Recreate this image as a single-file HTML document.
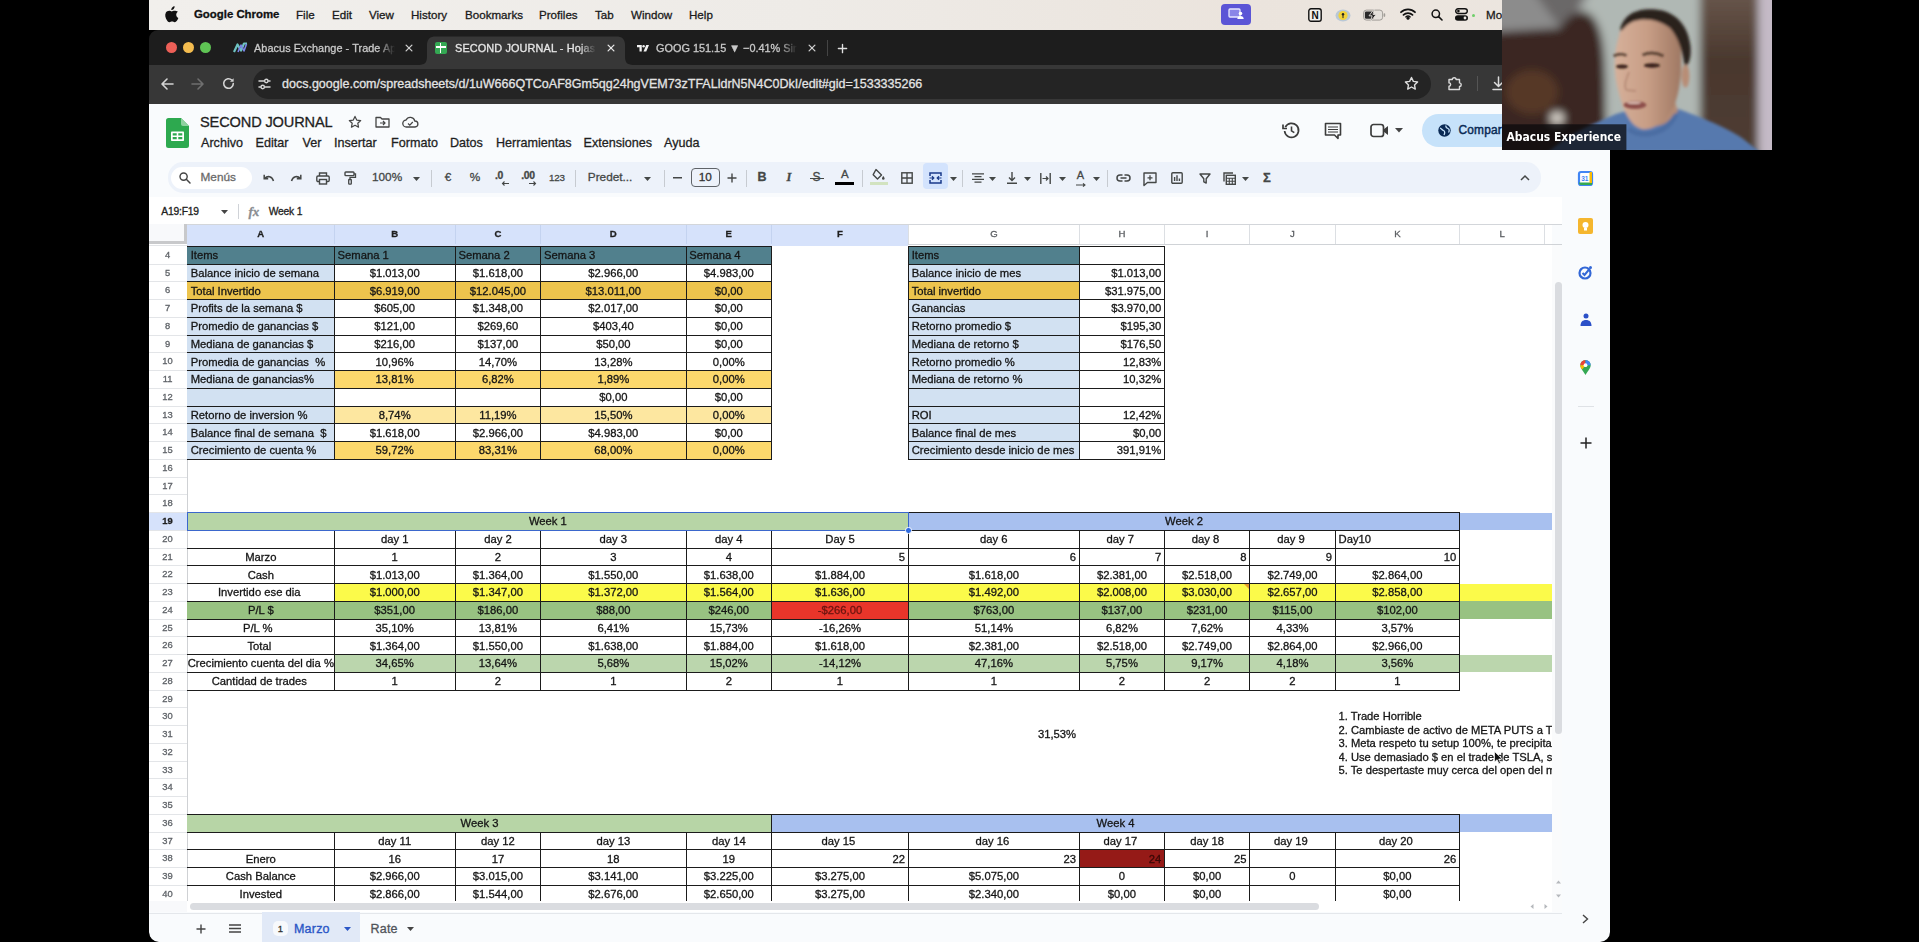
<!DOCTYPE html>
<html><head><meta charset="utf-8"><title>SECOND JOURNAL</title>
<style>
html,body{margin:0;padding:0;background:#000;}
body{width:1919px;height:942px;position:relative;overflow:hidden;font-family:"Liberation Sans",sans-serif;}
#r div{position:absolute;white-space:nowrap;box-sizing:border-box;overflow:visible}
#r svg{position:absolute;overflow:visible}
#r{filter:blur(0.4px)}
#r div{-webkit-text-stroke:0.3px currentColor}
</style></head><body><div id="r">
<div style="left:149.00px;top:0.00px;width:1461.00px;height:30.00px;background:linear-gradient(90deg,#f1efec 0%,#eeebe7 45%,#ebe4dd 75%,#ece6e0 100%);"></div>
<svg style="left:165px;top:6px" width="14" height="17" viewBox="0 0 14 17"><path d="M9.6 0.3c.1 1-.3 1.9-.9 2.6-.6.7-1.500 1.200-2.400 1.100-.1-.9.300-1.900.900-2.500.6-.7 1.600-1.200 2.400-1.200zM12.900 5.800c-.1.100-1.700 1-1.700 3 0 2.400 2.100 3.200 2.100 3.200 0 .1-.300 1.200-1.100 2.300-.7 1-1.400 1.900-2.500 1.900s-1.400-.6-2.600-.6c-1.200 0-1.600.6-2.600.7-1.100 0-1.900-1-2.600-2C.5 12.300-.5 8.900.9 6.600c.7-1.200 1.900-1.900 3.200-1.900 1 0 2 .7 2.600.7.600 0 1.800-.800 3.100-.700.500 0 2 .200 3.100 1.100z" fill="#111"/></svg>
<div style="left:194.00px;top:0.00px;width:90.00px;height:29.00px;line-height:29.00px;font-size:11.4px;color:#111;text-align:left;font-weight:700;">Google Chrome</div>
<div style="left:296.00px;top:0.00px;width:60.00px;height:29.00px;line-height:29.00px;font-size:11.6px;color:#1a1a1a;text-align:left;font-weight:400;">File</div>
<div style="left:332.00px;top:0.00px;width:60.00px;height:29.00px;line-height:29.00px;font-size:11.6px;color:#1a1a1a;text-align:left;font-weight:400;">Edit</div>
<div style="left:369.00px;top:0.00px;width:60.00px;height:29.00px;line-height:29.00px;font-size:11.6px;color:#1a1a1a;text-align:left;font-weight:400;">View</div>
<div style="left:411.00px;top:0.00px;width:60.00px;height:29.00px;line-height:29.00px;font-size:11.6px;color:#1a1a1a;text-align:left;font-weight:400;">History</div>
<div style="left:465.00px;top:0.00px;width:60.00px;height:29.00px;line-height:29.00px;font-size:11.6px;color:#1a1a1a;text-align:left;font-weight:400;">Bookmarks</div>
<div style="left:539.00px;top:0.00px;width:60.00px;height:29.00px;line-height:29.00px;font-size:11.6px;color:#1a1a1a;text-align:left;font-weight:400;">Profiles</div>
<div style="left:595.00px;top:0.00px;width:60.00px;height:29.00px;line-height:29.00px;font-size:11.6px;color:#1a1a1a;text-align:left;font-weight:400;">Tab</div>
<div style="left:631.00px;top:0.00px;width:60.00px;height:29.00px;line-height:29.00px;font-size:11.6px;color:#1a1a1a;text-align:left;font-weight:400;">Window</div>
<div style="left:689.00px;top:0.00px;width:60.00px;height:29.00px;line-height:29.00px;font-size:11.6px;color:#1a1a1a;text-align:left;font-weight:400;">Help</div>
<div style="left:1220.80px;top:4.00px;width:30.50px;height:20.50px;background:#5b55d6;border-radius:4px"></div>
<svg style="left:1228px;top:8px" width="17" height="12" viewBox="0 0 17 12"><rect x="1" y="1" width="11" height="8" rx="1" fill="#8a86e8" stroke="#e8e8ff" stroke-width="1.3"/><circle cx="12.500" cy="5.500" r="1.800" fill="#fff"/><path d="M9.300 11c0-2 1.400-3 3.200-3s3.200 1 3.200 3z" fill="#fff"/></svg>
<svg style="left:1308px;top:8px" width="14" height="14" viewBox="0 0 14 14"><rect x=".8" y=".8" width="12.400" height="12.400" rx="2.200" fill="#f4f2ee" stroke="#111" stroke-width="1.400"/><text x="7" y="11" font-size="10" font-weight="700" text-anchor="middle" font-family="Liberation Sans,sans-serif" fill="#111">N</text></svg>
<svg style="left:1335px;top:7px" width="16" height="16" viewBox="0 0 16 16"><ellipse cx="8" cy="8.500" rx="7.500" ry="6" fill="#b9c8d6"/><circle cx="8" cy="8.500" r="4.600" fill="#f1d23c"/><circle cx="8" cy="7.200" r="1.200" fill="#222"/><rect x="7.500" y="7.500" width="1" height="3.600" fill="#222"/></svg>
<svg style="left:1363px;top:8.500px" width="23" height="13" viewBox="0 0 23 13"><rect x=".6" y="1.100" width="19" height="10" rx="2.800" fill="#e4e0db" stroke="#a19d98" stroke-width="1"/><rect x="1.900" y="2.400" width="8.800" height="7.400" rx="1.400" fill="#2a2a2a"/><path d="M11.300 0 6 6.800h3.100L7.600 12.600 13.200 5.400H10z" fill="#222" stroke="#e4e0db" stroke-width=".9" stroke-linejoin="round"/><rect x="20.600" y="4.300" width="1.600" height="3.600" rx=".8" fill="#a19d98"/></svg>
<svg style="left:1400px;top:8px" width="16" height="12" viewBox="0 0 16 12"><path d="M1 4.200a10 10 0 0 1 14 0" fill="none" stroke="#111" stroke-width="1.800" stroke-linecap="round"/><path d="M3.500 6.900a6.500 6.500 0 0 1 9 0" fill="none" stroke="#111" stroke-width="1.800" stroke-linecap="round"/><circle cx="8" cy="10.200" r="1.500" fill="#111"/><path d="M6 8.900a3 3 0 0 1 4 0" fill="none" stroke="#111" stroke-width="1.500" stroke-linecap="round"/></svg>
<svg style="left:1431px;top:9px" width="12" height="12" viewBox="0 0 12 12"><circle cx="4.800" cy="4.800" r="3.700" fill="none" stroke="#111" stroke-width="1.500"/><path d="M7.600 7.600 11 11" stroke="#111" stroke-width="1.600" stroke-linecap="round"/></svg>
<svg style="left:1455px;top:8px" width="14" height="13" viewBox="0 0 14 13"><rect x=".7" y=".7" width="11.600" height="4.800" rx="2.400" fill="none" stroke="#111" stroke-width="1.400"/><circle cx="3.400" cy="3.100" r="1.300" fill="#111"/><rect x="0" y="7.200" width="13" height="5.600" rx="2.800" fill="#111"/><circle cx="10" cy="10" r="1.400" fill="#ece8e3"/></svg>
<div style="left:1471.50px;top:13.50px;width:3.00px;height:3.00px;background:#6fcf6a;border-radius:2px"></div>
<div style="left:1486.00px;top:0.00px;width:20.00px;height:29.00px;line-height:29.00px;font-size:11.6px;color:#1a1a1a;text-align:left;font-weight:400;">Mo</div>
<div style="left:149.00px;top:30.00px;width:1461.00px;height:35.50px;background:#1d1d1d;border-radius:9px 9px 0 0"></div>
<div style="left:149.00px;top:64.50px;width:1461.00px;height:39.50px;background:#373737;"></div>
<svg style="left:417px;top:36px" width="220" height="30" viewBox="0 0 220 30"><path d="M0 29 C8 29 10 27 10 20 V9 C10 3 13 0.5 19 0.500 H199 C205 0.500 208 3 208 9 V20 C208 27 210 29 218 29 Z" fill="#373737"/></svg>
<div style="left:166.00px;top:42.00px;width:11.00px;height:11.00px;background:#ec5f57;border-radius:50%"></div>
<div style="left:183.00px;top:42.00px;width:11.00px;height:11.00px;background:#f3bc4f;border-radius:50%"></div>
<div style="left:200.00px;top:42.00px;width:11.00px;height:11.00px;background:#5fc454;border-radius:50%"></div>
<svg style="left:233px;top:42px" width="15" height="11" viewBox="0 0 15 11"><path d="M1 10 4.500 2.500 8 8.500 11 1.500h3" fill="none" stroke="#6ec3c1" stroke-width="2.200" stroke-linejoin="round"/><path d="M5 10 8 3l3 6 2.500-7" fill="none" stroke="#7b86e8" stroke-width="1.600" stroke-linejoin="round"/></svg>
<div style="left:254.00px;top:36.00px;width:150.00px;height:24.00px;line-height:24.00px;font-size:10.9px;color:#c9c9c9;text-align:left;font-weight:400;letter-spacing:0.05px;overflow:hidden;width:141px;-webkit-mask-image:linear-gradient(90deg,#000 88%,transparent);">Abacus Exchange - Trade Ap</div>
<svg style="left:404px;top:43px" width="10" height="10" viewBox="-5 -5 10 10"><path d="M-2.9 -2.9L2.9 2.9M2.9 -2.9L-2.9 2.9" stroke="#d0d0d0" stroke-width="1.3" stroke-linecap="round"/></svg>
<div style="left:434.50px;top:41.50px;width:12.50px;height:12.50px;background:#34a853;border-radius:2px"></div>
<div style="left:439.60px;top:43.00px;width:1.60px;height:9.50px;background:#fff;"></div>
<div style="left:436.00px;top:46.00px;width:9.50px;height:1.50px;background:#fff;"></div>
<div style="left:455.00px;top:36.00px;width:150.00px;height:24.00px;line-height:24.00px;font-size:10.9px;color:#e6e6e6;text-align:left;font-weight:400;letter-spacing:0.12px;overflow:hidden;width:141px;-webkit-mask-image:linear-gradient(90deg,#000 88%,transparent);">SECOND JOURNAL - Hojas d</div>
<svg style="left:605.5px;top:43px" width="10" height="10" viewBox="-5 -5 10 10"><path d="M-2.9 -2.9L2.9 2.9M2.9 -2.9L-2.9 2.9" stroke="#e8e8e8" stroke-width="1.3" stroke-linecap="round"/></svg>
<svg style="left:636.500px;top:45px" width="12" height="6.500" viewBox="0 0 24 13"><path d="M0 0h9.500v13H5V4.500H0z" fill="#f2f2f2"/><circle cx="13.200" cy="2.400" r="2.400" fill="#f2f2f2"/><path d="M18.500 0H24l-5.500 13H13z" fill="#f2f2f2"/></svg>
<div style="left:656.00px;top:36.00px;width:150.00px;height:24.00px;line-height:24.00px;font-size:10.9px;color:#c9c9c9;text-align:left;font-weight:400;overflow:hidden;width:141px;-webkit-mask-image:linear-gradient(90deg,#000 88%,transparent);">GOOG 151.15 ▼ −0.41% Sin n</div>
<svg style="left:806.5px;top:43px" width="10" height="10" viewBox="-5 -5 10 10"><path d="M-2.9 -2.9L2.9 2.9M2.9 -2.9L-2.9 2.9" stroke="#d0d0d0" stroke-width="1.3" stroke-linecap="round"/></svg>
<div style="left:826.50px;top:40.00px;width:1.00px;height:16.00px;background:#444;"></div>
<svg style="left:836.500px;top:42.500px" width="11" height="11" viewBox="0 0 12 12"><path d="M6 1.500v9M1.500 6h9" stroke="#e0e0e0" stroke-width="1.500" stroke-linecap="round"/></svg>
<div style="left:252.50px;top:68.50px;width:1178.50px;height:30.00px;background:#242424;border-radius:15px"></div>
<svg style="left:161px;top:78px" width="13" height="12" viewBox="0 0 13 12"><path d="M12 6H1.500M6 1 1 6l5 5" fill="none" stroke="#d4d4d4" stroke-width="1.600" stroke-linecap="round" stroke-linejoin="round"/></svg>
<svg style="left:191px;top:78px" width="13" height="12" viewBox="0 0 13 12"><path d="M1 6h10.500M7 1l5 5-5 5" fill="none" stroke="#6f6f6f" stroke-width="1.600" stroke-linecap="round" stroke-linejoin="round"/></svg>
<svg style="left:222px;top:77px" width="13" height="13" viewBox="0 0 13 13"><path d="M11.300 6.500a4.800 4.800 0 1 1-1.500-3.500" fill="none" stroke="#d4d4d4" stroke-width="1.600" stroke-linecap="round"/><path d="M11.600 1.200v3.600H8z" fill="#d4d4d4"/></svg>
<svg style="left:258px;top:78px" width="13" height="12" viewBox="0 0 13 12"><path d="M1 3h5M10.500 3H12M1 9h1.500M7 9h5" stroke="#d4d4d4" stroke-width="1.500" stroke-linecap="round"/><circle cx="8.300" cy="3" r="1.700" fill="none" stroke="#d4d4d4" stroke-width="1.400"/><circle cx="4.700" cy="9" r="1.700" fill="none" stroke="#d4d4d4" stroke-width="1.400"/></svg>
<div style="left:282.00px;top:70.30px;width:700.00px;height:29.00px;line-height:29.00px;font-size:12.5px;color:#e3e3e3;text-align:left;font-weight:400;">docs.google.com/spreadsheets/d/1uW666QTCoAF8Gm5qg24hgVEM73zTFALldrN5N4C0DkI/edit#gid=1533335266</div>
<svg style="left:1404px;top:76px" width="15" height="15" viewBox="0 0 15 15"><path d="M7.500 1.500l1.850 3.900 4.250.55-3.100 2.950.8 4.200-3.800-2.100-3.800 2.100.8-4.200L1.400 5.950l4.250-.55z" fill="none" stroke="#dcdcdc" stroke-width="1.400" stroke-linejoin="round"/></svg>
<svg style="left:1447px;top:76px" width="15" height="15" viewBox="0 0 15 15"><path d="M2 3.500h3.300c0-2.400 3.800-2.400 3.800 0h3.400v3.400c2.300 0 2.300 3.600 0 3.600v3H2v-3.200c2.200 0 2.200-3.400 0-3.400z" fill="none" stroke="#dcdcdc" stroke-width="1.400" stroke-linejoin="round"/></svg>
<div style="left:1476.50px;top:76.00px;width:1.00px;height:15.00px;background:#555;"></div>
<svg style="left:1492px;top:76px" width="13" height="15" viewBox="0 0 13 15"><path d="M6.500 1v9M2.500 6.500l4 4 4-4M1 13.500h11" fill="none" stroke="#dcdcdc" stroke-width="1.500" stroke-linecap="round" stroke-linejoin="round"/></svg>
<div style="left:149.00px;top:103.70px;width:1461.00px;height:839.00px;background:#f9fbfd;border-radius:0 0 0 10px"></div>
<svg style="left:166px;top:118px" width="23" height="30" viewBox="0 0 23 30"><path d="M2.500 0H15l8 8v19.500a2.500 2.500 0 0 1-2.500 2.500h-18A2.500 2.500 0 0 1 0 27.500v-25A2.500 2.500 0 0 1 2.500 0z" fill="#2da94f"/><path d="M15 0l8 8h-6a2 2 0 0 1-2-2z" fill="#8ed1a0"/><rect x="5" y="13.500" width="13" height="9.500" rx=".8" fill="#fff"/><path d="M6.700 15.200h4v2.300h-4zM12.300 15.200h4v2.300h-4zM6.700 19h4v2.300h-4zM12.300 19h4v2.300h-4z" fill="#2da94f"/></svg>
<div style="left:200.00px;top:111.00px;width:160.00px;height:22.00px;line-height:22.00px;font-size:14.6px;color:#1f1f1f;text-align:left;font-weight:400;letter-spacing:-0.15px">SECOND JOURNAL</div>
<svg style="left:348px;top:115px" width="14" height="14" viewBox="0 0 15 15"><path d="M7.500 1.500l1.850 3.900 4.250.55-3.100 2.950.8 4.200-3.800-2.100-3.800 2.100.8-4.200L1.400 5.950l4.250-.55z" fill="none" stroke="#444" stroke-width="1.300" stroke-linejoin="round"/></svg>
<svg style="left:375px;top:116px" width="15" height="12" viewBox="0 0 15 12"><path d="M1 1.500h4.500L7 3h7v8H1z" fill="none" stroke="#444" stroke-width="1.300" stroke-linejoin="round"/><path d="M5 7h4.500M8 5l2 2-2 2" fill="none" stroke="#444" stroke-width="1.200"/></svg>
<svg style="left:402px;top:116px" width="17" height="12" viewBox="0 0 17 12"><path d="M4.500 11a3.500 3.500 0 0 1-.4-7 4.600 4.600 0 0 1 8.700 1A3 3 0 0 1 13 11z" fill="none" stroke="#444" stroke-width="1.300" stroke-linejoin="round"/><path d="M6 7.500l1.800 1.700 3-3.200" fill="none" stroke="#444" stroke-width="1.200"/></svg>
<div style="left:201.00px;top:133.00px;width:100.00px;height:20.00px;line-height:20.00px;font-size:12.6px;color:#1f1f1f;text-align:left;font-weight:400;">Archivo</div>
<div style="left:255.50px;top:133.00px;width:100.00px;height:20.00px;line-height:20.00px;font-size:12.6px;color:#1f1f1f;text-align:left;font-weight:400;">Editar</div>
<div style="left:302.50px;top:133.00px;width:100.00px;height:20.00px;line-height:20.00px;font-size:12.6px;color:#1f1f1f;text-align:left;font-weight:400;">Ver</div>
<div style="left:334.00px;top:133.00px;width:100.00px;height:20.00px;line-height:20.00px;font-size:12.6px;color:#1f1f1f;text-align:left;font-weight:400;">Insertar</div>
<div style="left:391.00px;top:133.00px;width:100.00px;height:20.00px;line-height:20.00px;font-size:12.6px;color:#1f1f1f;text-align:left;font-weight:400;">Formato</div>
<div style="left:450.00px;top:133.00px;width:100.00px;height:20.00px;line-height:20.00px;font-size:12.6px;color:#1f1f1f;text-align:left;font-weight:400;">Datos</div>
<div style="left:496.00px;top:133.00px;width:100.00px;height:20.00px;line-height:20.00px;font-size:12.6px;color:#1f1f1f;text-align:left;font-weight:400;">Herramientas</div>
<div style="left:583.50px;top:133.00px;width:100.00px;height:20.00px;line-height:20.00px;font-size:12.6px;color:#1f1f1f;text-align:left;font-weight:400;">Extensiones</div>
<div style="left:664.00px;top:133.00px;width:100.00px;height:20.00px;line-height:20.00px;font-size:12.6px;color:#1f1f1f;text-align:left;font-weight:400;">Ayuda</div>
<svg style="left:1281.500px;top:121px" width="19" height="19" viewBox="0 0 19 19"><path d="M3.300 6.200A7 7 0 1 1 2.600 10" fill="none" stroke="#3c3c3c" stroke-width="1.700"/><path d="M1 3.500v4h4" fill="none" stroke="#3c3c3c" stroke-width="1.700"/><path d="M9.500 5.500v4.300l2.800 1.800" fill="none" stroke="#3c3c3c" stroke-width="1.600"/></svg>
<svg style="left:1323.500px;top:122px" width="18" height="18" viewBox="0 0 18 18"><path d="M1.500 1.500h15v11.500h-2.500v3.500l-3.500-3.500H1.500z" fill="none" stroke="#3c3c3c" stroke-width="1.600" stroke-linejoin="round"/><path d="M4 5h10M4 7.500h10M4 10h10" stroke="#3c3c3c" stroke-width="1.200"/></svg>
<svg style="left:1369.500px;top:123px" width="20" height="15" viewBox="0 0 20 15"><rect x="1" y="1.500" width="12.500" height="12" rx="2.500" fill="none" stroke="#3c3c3c" stroke-width="1.700"/><path d="M13.500 6.500 18 3v9l-4.500-3.500z" fill="#3c3c3c"/></svg>
<svg style="left:1395px;top:128px" width="8" height="5" viewBox="0 0 8 5"><path d="M0 0h8L4 4.500z" fill="#444"/></svg>
<div style="left:1422.00px;top:113.60px;width:120.00px;height:33.00px;background:#c6e2fa;border-radius:17px"></div>
<svg style="left:1437.500px;top:123.800px" width="13" height="13" viewBox="0 0 13 13"><circle cx="6.500" cy="6.500" r="6.200" fill="#0a2a55"/><path d="M2 4c1.500.5 2 2 3.500 2.500S7 9 6 11M8 1.500c-.5 1.500.5 2.500 2 3s1.500 2.500.5 4" fill="none" stroke="#c6e2fa" stroke-width="1.300"/></svg>
<div style="left:1458.50px;top:120.00px;width:60.00px;height:21.00px;line-height:21.00px;font-size:11.9px;color:#0a2a55;text-align:left;font-weight:400;letter-spacing:0.2px;-webkit-text-stroke:0.45px #0a2a55">Compar</div>
<div style="left:168.00px;top:162.30px;width:1373.00px;height:31.20px;background:#edf2fa;border-radius:15px"></div>
<div style="left:171.00px;top:166.50px;width:81.00px;height:22.00px;background:#fff;border-radius:11px"></div>
<svg style="left:179px;top:171.5px" width="12" height="12" viewBox="0 0 12 12"><circle cx="4.600" cy="4.600" r="3.600" fill="none" stroke="#444" stroke-width="1.400"/><path d="M7.300 7.300 11 11" stroke="#444" stroke-width="1.500" stroke-linecap="round"/></svg>
<div style="left:200.50px;top:167.20px;width:50.00px;height:21.00px;line-height:21.00px;font-size:11.8px;color:#6a6a6a;text-align:left;font-weight:400;">Menús</div>
<svg style="left:263.30px;top:173.20px" width="12" height="11" viewBox="0 0 12 11"><path d="M1.500 5.500c3-3 7.500-2.500 9 2.500" fill="none" stroke="#444746" stroke-width="1.500"/><path d="M1.200 1.800v4h4" fill="none" stroke="#444746" stroke-width="1.500"/></svg>
<svg style="left:289.90px;top:173.20px" width="12" height="11" viewBox="0 0 12 11"><path d="M10.500 5.500c-3-3-7.500-2.500-9 2.500" fill="none" stroke="#444746" stroke-width="1.500"/><path d="M10.800 1.800v4h-4" fill="none" stroke="#444746" stroke-width="1.500"/></svg>
<svg style="left:315.90px;top:171.50px" width="14" height="13" viewBox="0 0 14 13"><path d="M3.500 4V1h7v3" fill="none" stroke="#444746" stroke-width="1.400"/><rect x=".8" y="4" width="12.400" height="5.500" rx="1.200" fill="none" stroke="#444746" stroke-width="1.400"/><rect x="3.500" y="7.500" width="7" height="4.500" fill="#edf2fa" stroke="#444746" stroke-width="1.400"/></svg>
<svg style="left:343.50px;top:171.00px" width="12" height="14" viewBox="0 0 12 14"><rect x="1" y="1" width="9" height="3.600" rx=".8" fill="none" stroke="#444746" stroke-width="1.400"/><path d="M10 2.800h1.500v3.500H6v2.200" fill="none" stroke="#444746" stroke-width="1.300"/><rect x="4.700" y="8.500" width="2.600" height="4.600" rx=".6" fill="none" stroke="#444746" stroke-width="1.300"/></svg>
<div style="left:372.00px;top:167.20px;width:40.00px;height:21.50px;line-height:21.50px;font-size:11.8px;color:#444746;text-align:left;font-weight:400;">100%</div>
<svg style="left:413.20px;top:176.50px" width="7" height="4" viewBox="0 0 7 4"><path d="M0 0h7L3.500 4z" fill="#444746"/></svg>
<div style="left:430.90px;top:169.50px;width:1.00px;height:17.00px;background:#c7cbd1;"></div>
<div style="left:438.00px;top:167.20px;width:20.00px;height:21.50px;line-height:21.50px;font-size:11.8px;color:#444746;text-align:center;font-weight:400;">€</div>
<div style="left:464.90px;top:167.20px;width:20.00px;height:21.50px;line-height:21.50px;font-size:11.8px;color:#444746;text-align:center;font-weight:400;">%</div>
<div style="left:492.00px;top:164.70px;width:14.00px;height:21.50px;line-height:21.50px;font-size:10.4px;color:#444746;text-align:center;font-weight:600;letter-spacing:-0.3px">.0</div>
<svg style="left:501.00px;top:180.50px" width="8" height="5" viewBox="0 0 8 5"><path d="M8 2.500H1.500M3.500.5l-2 2 2 2" fill="none" stroke="#444746" stroke-width="1.100"/></svg>
<div style="left:519.00px;top:164.70px;width:18.00px;height:21.50px;line-height:21.50px;font-size:10.4px;color:#444746;text-align:center;font-weight:600;letter-spacing:-0.3px">.00</div>
<svg style="left:529.00px;top:180.50px" width="8" height="5" viewBox="0 0 8 5"><path d="M0 2.500h6.500M4.500.5l2 2-2 2" fill="none" stroke="#444746" stroke-width="1.100"/></svg>
<div style="left:549.00px;top:167.20px;width:20.00px;height:21.50px;line-height:21.50px;font-size:9.8px;color:#444746;text-align:left;font-weight:400;letter-spacing:-0.2px">123</div>
<div style="left:574.50px;top:169.50px;width:1.00px;height:17.00px;background:#c7cbd1;"></div>
<div style="left:587.80px;top:167.20px;width:50.00px;height:21.50px;line-height:21.50px;font-size:11.8px;color:#444746;text-align:left;font-weight:400;">Predet...</div>
<svg style="left:644.30px;top:176.50px" width="7" height="4" viewBox="0 0 7 4"><path d="M0 0h7L3.500 4z" fill="#444746"/></svg>
<div style="left:663.50px;top:169.50px;width:1.00px;height:17.00px;background:#c7cbd1;"></div>
<svg style="left:673.00px;top:177.00px" width="9" height="2" viewBox="0 0 9 2"><rect width="9" height="1.500" fill="#444746"/></svg>
<div style="left:690.60px;top:168.20px;width:29.20px;height:19.00px;background:transparent;border:1px solid #5f6368;border-radius:4px"></div>
<div style="left:690.60px;top:168.20px;width:29.20px;height:19.50px;line-height:19.50px;font-size:11.8px;color:#333;text-align:center;font-weight:400;">10</div>
<svg style="left:726.60px;top:173.00px" width="10" height="10" viewBox="0 0 10 10"><path d="M5 .5v9M.5 5h9" stroke="#444746" stroke-width="1.400"/></svg>
<div style="left:745.80px;top:169.50px;width:1.00px;height:17.00px;background:#c7cbd1;"></div>
<div style="left:754.00px;top:167.20px;width:16.00px;height:21.50px;line-height:21.50px;font-size:12.5px;color:#444746;text-align:center;font-weight:700;">B</div>
<div style="left:781.00px;top:167.20px;width:16.00px;height:21.50px;line-height:21.50px;font-size:12.5px;color:#444746;text-align:center;font-weight:700;font-style:italic;font-family:Liberation Serif,serif">I</div>
<div style="left:808.60px;top:167.20px;width:16.00px;height:21.50px;line-height:21.50px;font-size:12px;color:#444746;text-align:center;font-weight:400;">S</div>
<div style="left:810.00px;top:177.60px;width:13.50px;height:1.30px;background:#444746;"></div>
<div style="left:836.80px;top:164.20px;width:16.00px;height:21.50px;line-height:21.50px;font-size:11.5px;color:#444746;text-align:center;font-weight:400;">A</div>
<div style="left:834.70px;top:182.30px;width:19.70px;height:2.70px;background:#000;"></div>
<div style="left:861.50px;top:169.50px;width:1.00px;height:17.00px;background:#c7cbd1;"></div>
<svg style="left:871.50px;top:168.20px" width="13" height="13" viewBox="0 0 13 13"><path d="M4 1.500l5.500 5.500-4 4-4.300-4.300z" fill="none" stroke="#444746" stroke-width="1.400" stroke-linejoin="round"/><path d="M11.300 8c.9 1.200 1.300 1.900 1.300 2.500a1.300 1.300 0 0 1-2.600 0c0-.6.400-1.300 1.300-2.500z" fill="#444746"/></svg>
<div style="left:869.80px;top:182.30px;width:18.70px;height:2.70px;background:#d2e3c0;"></div>
<svg style="left:901.30px;top:172.00px" width="12" height="12" viewBox="0 0 12 12"><rect x=".8" y=".8" width="10.400" height="10.400" fill="none" stroke="#444746" stroke-width="1.400"/><path d="M6 1v10M1 6h10" stroke="#444746" stroke-width="1.300"/></svg>
<div style="left:923.00px;top:162.70px;width:25.00px;height:26.60px;background:#d3e3fd;border-radius:4px"></div>
<svg style="left:928.90px;top:172.00px" width="13" height="12" viewBox="0 0 13 12"><path d="M1 4V1h11v3M1 8v3h11V8" fill="none" stroke="#1a3a8a" stroke-width="1.500"/><path d="M.5 6h4M3 4.300 4.800 6 3 7.700M12.500 6h-4M10 4.300 8.200 6 10 7.700" fill="none" stroke="#1a3a8a" stroke-width="1.200"/></svg>
<svg style="left:950.10px;top:176.50px" width="7" height="4" viewBox="0 0 7 4"><path d="M0 0h7L3.500 4z" fill="#444746"/></svg>
<div style="left:961.50px;top:169.50px;width:1.00px;height:17.00px;background:#c7cbd1;"></div>
<svg style="left:971.60px;top:173.00px" width="12" height="10" viewBox="0 0 12 10"><path d="M0 .8h12M2.500 3.600h7M0 6.400h12M2.500 9.200h7" stroke="#444746" stroke-width="1.300"/></svg>
<svg style="left:989.20px;top:176.50px" width="7" height="4" viewBox="0 0 7 4"><path d="M0 0h7L3.500 4z" fill="#444746"/></svg>
<svg style="left:1007.00px;top:172.00px" width="10" height="12" viewBox="0 0 10 12"><path d="M5 0v8M2 5.500l3 3 3-3M0 11.200h10" fill="none" stroke="#444746" stroke-width="1.400"/></svg>
<svg style="left:1023.50px;top:176.50px" width="7" height="4" viewBox="0 0 7 4"><path d="M0 0h7L3.500 4z" fill="#444746"/></svg>
<svg style="left:1040.30px;top:172.50px" width="11" height="11" viewBox="0 0 11 11"><path d="M.8 0v11M10.200 0v11" stroke="#444746" stroke-width="1.400"/><path d="M2.500 5.500H8M6 3.500l2 2-2 2" fill="none" stroke="#444746" stroke-width="1.200"/></svg>
<svg style="left:1058.50px;top:176.50px" width="7" height="4" viewBox="0 0 7 4"><path d="M0 0h7L3.500 4z" fill="#444746"/></svg>
<div style="left:1072.50px;top:165.20px;width:16.00px;height:21.50px;line-height:21.50px;font-size:11px;color:#444746;text-align:center;font-weight:400;">A</div>
<svg style="left:1075.50px;top:183.20px" width="11" height="4" viewBox="0 0 11 4"><path d="M0 2h9M7 .3 9 2 7 3.700" fill="none" stroke="#444746" stroke-width="1.100"/></svg>
<svg style="left:1093.00px;top:176.50px" width="7" height="4" viewBox="0 0 7 4"><path d="M0 0h7L3.500 4z" fill="#444746"/></svg>
<div style="left:1106.90px;top:169.50px;width:1.00px;height:17.00px;background:#c7cbd1;"></div>
<svg style="left:1115.50px;top:174.00px" width="15" height="8" viewBox="0 0 15 8"><path d="M6.500 1H4a3 3 0 0 0 0 6h2.500M8.500 1H11a3 3 0 0 1 0 6H8.500M4.500 4h6" fill="none" stroke="#444746" stroke-width="1.500"/></svg>
<svg style="left:1143.30px;top:171.50px" width="14" height="14" viewBox="0 0 14 14"><path d="M1 1h12v9.500H4.500L1 13.500z" fill="none" stroke="#444746" stroke-width="1.400" stroke-linejoin="round"/><path d="M7 3.300v5M4.500 5.800h5" stroke="#444746" stroke-width="1.300"/></svg>
<svg style="left:1171.00px;top:172.00px" width="12" height="12" viewBox="0 0 12 12"><rect x=".8" y=".8" width="10.400" height="10.400" rx="1" fill="none" stroke="#444746" stroke-width="1.400"/><path d="M3.600 9V5M6 9V3.300M8.400 9V6.500" stroke="#444746" stroke-width="1.400"/></svg>
<svg style="left:1199.00px;top:172.50px" width="12" height="11" viewBox="0 0 12 11"><path d="M1 1h10L7.200 5.800v4.200L4.800 8.800V5.800z" fill="none" stroke="#444746" stroke-width="1.400" stroke-linejoin="round"/></svg>
<svg style="left:1222.90px;top:171.50px" width="13" height="13" viewBox="0 0 13 13"><path d="M1 9.500V1h9" fill="none" stroke="#444746" stroke-width="1.400"/><rect x="3.300" y="3.300" width="9" height="9" fill="none" stroke="#444746" stroke-width="1.400"/><path d="M3.300 6.300h9M6.300 6.300v6M9.300 6.300v6M3.300 9.300h9" stroke="#444746" stroke-width="1.100"/></svg>
<svg style="left:1242.10px;top:176.50px" width="7" height="4" viewBox="0 0 7 4"><path d="M0 0h7L3.500 4z" fill="#444746"/></svg>
<div style="left:1259.00px;top:167.20px;width:16.00px;height:21.50px;line-height:21.50px;font-size:13px;color:#444746;text-align:center;font-weight:700;">Σ</div>
<svg style="left:1519.50px;top:175.00px" width="10" height="6" viewBox="0 0 10 6"><path d="M1 5l4-4 4 4" fill="none" stroke="#444746" stroke-width="1.500"/></svg>
<div style="left:149.00px;top:196.50px;width:1413.00px;height:27.50px;background:#fff;"></div>
<div style="left:161.30px;top:202.00px;width:60.00px;height:20.00px;line-height:20.00px;font-size:10.3px;color:#222;text-align:left;font-weight:400;letter-spacing:-0.2px">A19:F19</div>
<svg style="left:221.00px;top:209.50px" width="7" height="4" viewBox="0 0 7 4"><path d="M0 0h7L3.500 4z" fill="#444"/></svg>
<div style="left:238.00px;top:204.00px;width:1.00px;height:15.00px;background:#d0d3d8;"></div>
<div style="left:248.50px;top:201.50px;width:16.00px;height:20.00px;line-height:20.00px;font-size:13px;color:#8a8d91;text-align:left;font-weight:700;font-style:italic;font-family:Liberation Serif,serif">fx</div>
<div style="left:268.70px;top:202.00px;width:80.00px;height:20.00px;line-height:20.00px;font-size:10.3px;color:#222;text-align:left;font-weight:400;letter-spacing:-0.2px">Week 1</div>
<div style="left:149.00px;top:224.40px;width:1403.00px;height:676.80px;background:#fff;"></div>
<div style="left:187.40px;top:224.40px;width:721.00px;height:21.20px;background:#d6e2fb;"></div>
<div style="left:187.40px;top:224.40px;width:146.90px;height:19.50px;line-height:19.50px;font-size:9.6px;color:#1f1f1f;text-align:center;font-weight:700;">A</div>
<div style="left:334.30px;top:224.40px;width:120.80px;height:19.50px;line-height:19.50px;font-size:9.6px;color:#1f1f1f;text-align:center;font-weight:700;">B</div>
<div style="left:333.80px;top:224.40px;width:1.00px;height:19.80px;background:#c4d3f0;"></div>
<div style="left:455.10px;top:224.40px;width:85.60px;height:19.50px;line-height:19.50px;font-size:9.6px;color:#1f1f1f;text-align:center;font-weight:700;">C</div>
<div style="left:454.60px;top:224.40px;width:1.00px;height:19.80px;background:#c4d3f0;"></div>
<div style="left:540.70px;top:224.40px;width:145.30px;height:19.50px;line-height:19.50px;font-size:9.6px;color:#1f1f1f;text-align:center;font-weight:700;">D</div>
<div style="left:540.20px;top:224.40px;width:1.00px;height:19.80px;background:#c4d3f0;"></div>
<div style="left:686.00px;top:224.40px;width:85.60px;height:19.50px;line-height:19.50px;font-size:9.6px;color:#1f1f1f;text-align:center;font-weight:700;">E</div>
<div style="left:685.50px;top:224.40px;width:1.00px;height:19.80px;background:#c4d3f0;"></div>
<div style="left:771.60px;top:224.40px;width:136.80px;height:19.50px;line-height:19.50px;font-size:9.6px;color:#1f1f1f;text-align:center;font-weight:700;">F</div>
<div style="left:771.10px;top:224.40px;width:1.00px;height:19.80px;background:#c4d3f0;"></div>
<div style="left:908.40px;top:224.40px;width:171.00px;height:19.50px;line-height:19.50px;font-size:9.6px;color:#5a5d61;text-align:center;font-weight:400;">G</div>
<div style="left:907.90px;top:224.40px;width:1.00px;height:19.80px;background:#dcdfe3;"></div>
<div style="left:1079.40px;top:224.40px;width:85.10px;height:19.50px;line-height:19.50px;font-size:9.6px;color:#5a5d61;text-align:center;font-weight:400;">H</div>
<div style="left:1078.90px;top:224.40px;width:1.00px;height:19.80px;background:#dcdfe3;"></div>
<div style="left:1164.50px;top:224.40px;width:85.20px;height:19.50px;line-height:19.50px;font-size:9.6px;color:#5a5d61;text-align:center;font-weight:400;">I</div>
<div style="left:1164.00px;top:224.40px;width:1.00px;height:19.80px;background:#dcdfe3;"></div>
<div style="left:1249.70px;top:224.40px;width:85.60px;height:19.50px;line-height:19.50px;font-size:9.6px;color:#5a5d61;text-align:center;font-weight:400;">J</div>
<div style="left:1249.20px;top:224.40px;width:1.00px;height:19.80px;background:#dcdfe3;"></div>
<div style="left:1335.30px;top:224.40px;width:124.20px;height:19.50px;line-height:19.50px;font-size:9.6px;color:#5a5d61;text-align:center;font-weight:400;">K</div>
<div style="left:1334.80px;top:224.40px;width:1.00px;height:19.80px;background:#dcdfe3;"></div>
<div style="left:1459.50px;top:224.40px;width:85.30px;height:19.50px;line-height:19.50px;font-size:9.6px;color:#5a5d61;text-align:center;font-weight:400;">L</div>
<div style="left:1459.00px;top:224.40px;width:1.00px;height:19.80px;background:#dcdfe3;"></div>
<div style="left:1544.30px;top:224.40px;width:1.00px;height:19.80px;background:#dcdfe3;"></div>
<div style="left:908.40px;top:243.90px;width:653.60px;height:1.00px;background:#d0d3d7;"></div>
<div style="left:149.00px;top:223.90px;width:1413.00px;height:1.00px;background:#d3d6da;"></div>
<div style="left:149.00px;top:224.40px;width:35.00px;height:16.50px;background:#f8f9fb;"></div>
<div style="left:149.00px;top:240.60px;width:38.40px;height:3.80px;background:#c8c9cb;"></div>
<div style="left:183.90px;top:224.40px;width:3.30px;height:20.00px;background:#c8c9cb;"></div>
<div style="left:149.00px;top:246.00px;width:37.00px;height:18.00px;line-height:18.00px;font-size:9.4px;color:#5f6368;text-align:center;font-weight:400;">4</div>
<div style="left:149.00px;top:263.55px;width:38.00px;height:1.00px;background:#e3e5e8;"></div>
<div style="left:149.00px;top:264.00px;width:37.00px;height:18.00px;line-height:18.00px;font-size:9.4px;color:#5f6368;text-align:center;font-weight:400;">5</div>
<div style="left:149.00px;top:281.30px;width:38.00px;height:1.00px;background:#e3e5e8;"></div>
<div style="left:149.00px;top:281.00px;width:37.00px;height:18.00px;line-height:18.00px;font-size:9.4px;color:#5f6368;text-align:center;font-weight:400;">6</div>
<div style="left:149.00px;top:299.05px;width:38.00px;height:1.00px;background:#e3e5e8;"></div>
<div style="left:149.00px;top:299.00px;width:37.00px;height:18.00px;line-height:18.00px;font-size:9.4px;color:#5f6368;text-align:center;font-weight:400;">7</div>
<div style="left:149.00px;top:316.80px;width:38.00px;height:1.00px;background:#e3e5e8;"></div>
<div style="left:149.00px;top:317.00px;width:37.00px;height:18.00px;line-height:18.00px;font-size:9.4px;color:#5f6368;text-align:center;font-weight:400;">8</div>
<div style="left:149.00px;top:334.55px;width:38.00px;height:1.00px;background:#e3e5e8;"></div>
<div style="left:149.00px;top:335.00px;width:37.00px;height:18.00px;line-height:18.00px;font-size:9.4px;color:#5f6368;text-align:center;font-weight:400;">9</div>
<div style="left:149.00px;top:352.30px;width:38.00px;height:1.00px;background:#e3e5e8;"></div>
<div style="left:149.00px;top:352.00px;width:37.00px;height:18.00px;line-height:18.00px;font-size:9.4px;color:#5f6368;text-align:center;font-weight:400;">10</div>
<div style="left:149.00px;top:370.05px;width:38.00px;height:1.00px;background:#e3e5e8;"></div>
<div style="left:149.00px;top:370.00px;width:37.00px;height:18.00px;line-height:18.00px;font-size:9.4px;color:#5f6368;text-align:center;font-weight:400;">11</div>
<div style="left:149.00px;top:387.80px;width:38.00px;height:1.00px;background:#e3e5e8;"></div>
<div style="left:149.00px;top:388.00px;width:37.00px;height:18.00px;line-height:18.00px;font-size:9.4px;color:#5f6368;text-align:center;font-weight:400;">12</div>
<div style="left:149.00px;top:405.55px;width:38.00px;height:1.00px;background:#e3e5e8;"></div>
<div style="left:149.00px;top:406.00px;width:37.00px;height:18.00px;line-height:18.00px;font-size:9.4px;color:#5f6368;text-align:center;font-weight:400;">13</div>
<div style="left:149.00px;top:423.30px;width:38.00px;height:1.00px;background:#e3e5e8;"></div>
<div style="left:149.00px;top:423.00px;width:37.00px;height:18.00px;line-height:18.00px;font-size:9.4px;color:#5f6368;text-align:center;font-weight:400;">14</div>
<div style="left:149.00px;top:441.05px;width:38.00px;height:1.00px;background:#e3e5e8;"></div>
<div style="left:149.00px;top:441.00px;width:37.00px;height:18.00px;line-height:18.00px;font-size:9.4px;color:#5f6368;text-align:center;font-weight:400;">15</div>
<div style="left:149.00px;top:458.80px;width:38.00px;height:1.00px;background:#e3e5e8;"></div>
<div style="left:149.00px;top:459.00px;width:37.00px;height:18.00px;line-height:18.00px;font-size:9.4px;color:#5f6368;text-align:center;font-weight:400;">16</div>
<div style="left:149.00px;top:476.55px;width:38.00px;height:1.00px;background:#e3e5e8;"></div>
<div style="left:149.00px;top:477.00px;width:37.00px;height:18.00px;line-height:18.00px;font-size:9.4px;color:#5f6368;text-align:center;font-weight:400;">17</div>
<div style="left:149.00px;top:494.30px;width:38.00px;height:1.00px;background:#e3e5e8;"></div>
<div style="left:149.00px;top:494.00px;width:37.00px;height:18.00px;line-height:18.00px;font-size:9.4px;color:#5f6368;text-align:center;font-weight:400;">18</div>
<div style="left:149.00px;top:512.05px;width:38.00px;height:1.00px;background:#e3e5e8;"></div>
<div style="left:149.00px;top:512.55px;width:38.00px;height:17.75px;background:#d6e2fb;"></div>
<div style="left:149.00px;top:512.00px;width:37.00px;height:18.00px;line-height:18.00px;font-size:9.4px;color:#1f1f1f;text-align:center;font-weight:700;">19</div>
<div style="left:149.00px;top:529.80px;width:38.00px;height:1.00px;background:#e3e5e8;"></div>
<div style="left:149.00px;top:530.00px;width:37.00px;height:18.00px;line-height:18.00px;font-size:9.4px;color:#5f6368;text-align:center;font-weight:400;">20</div>
<div style="left:149.00px;top:547.55px;width:38.00px;height:1.00px;background:#e3e5e8;"></div>
<div style="left:149.00px;top:548.00px;width:37.00px;height:18.00px;line-height:18.00px;font-size:9.4px;color:#5f6368;text-align:center;font-weight:400;">21</div>
<div style="left:149.00px;top:565.30px;width:38.00px;height:1.00px;background:#e3e5e8;"></div>
<div style="left:149.00px;top:565.00px;width:37.00px;height:18.00px;line-height:18.00px;font-size:9.4px;color:#5f6368;text-align:center;font-weight:400;">22</div>
<div style="left:149.00px;top:583.05px;width:38.00px;height:1.00px;background:#e3e5e8;"></div>
<div style="left:149.00px;top:583.00px;width:37.00px;height:18.00px;line-height:18.00px;font-size:9.4px;color:#5f6368;text-align:center;font-weight:400;">23</div>
<div style="left:149.00px;top:600.80px;width:38.00px;height:1.00px;background:#e3e5e8;"></div>
<div style="left:149.00px;top:601.00px;width:37.00px;height:18.00px;line-height:18.00px;font-size:9.4px;color:#5f6368;text-align:center;font-weight:400;">24</div>
<div style="left:149.00px;top:618.55px;width:38.00px;height:1.00px;background:#e3e5e8;"></div>
<div style="left:149.00px;top:619.00px;width:37.00px;height:18.00px;line-height:18.00px;font-size:9.4px;color:#5f6368;text-align:center;font-weight:400;">25</div>
<div style="left:149.00px;top:636.30px;width:38.00px;height:1.00px;background:#e3e5e8;"></div>
<div style="left:149.00px;top:636.00px;width:37.00px;height:18.00px;line-height:18.00px;font-size:9.4px;color:#5f6368;text-align:center;font-weight:400;">26</div>
<div style="left:149.00px;top:654.05px;width:38.00px;height:1.00px;background:#e3e5e8;"></div>
<div style="left:149.00px;top:654.00px;width:37.00px;height:18.00px;line-height:18.00px;font-size:9.4px;color:#5f6368;text-align:center;font-weight:400;">27</div>
<div style="left:149.00px;top:671.80px;width:38.00px;height:1.00px;background:#e3e5e8;"></div>
<div style="left:149.00px;top:672.00px;width:37.00px;height:18.00px;line-height:18.00px;font-size:9.4px;color:#5f6368;text-align:center;font-weight:400;">28</div>
<div style="left:149.00px;top:689.55px;width:38.00px;height:1.00px;background:#e3e5e8;"></div>
<div style="left:149.00px;top:690.00px;width:37.00px;height:18.00px;line-height:18.00px;font-size:9.4px;color:#5f6368;text-align:center;font-weight:400;">29</div>
<div style="left:149.00px;top:707.30px;width:38.00px;height:1.00px;background:#e3e5e8;"></div>
<div style="left:149.00px;top:707.00px;width:37.00px;height:18.00px;line-height:18.00px;font-size:9.4px;color:#5f6368;text-align:center;font-weight:400;">30</div>
<div style="left:149.00px;top:725.05px;width:38.00px;height:1.00px;background:#e3e5e8;"></div>
<div style="left:149.00px;top:725.00px;width:37.00px;height:18.00px;line-height:18.00px;font-size:9.4px;color:#5f6368;text-align:center;font-weight:400;">31</div>
<div style="left:149.00px;top:742.80px;width:38.00px;height:1.00px;background:#e3e5e8;"></div>
<div style="left:149.00px;top:743.00px;width:37.00px;height:18.00px;line-height:18.00px;font-size:9.4px;color:#5f6368;text-align:center;font-weight:400;">32</div>
<div style="left:149.00px;top:760.55px;width:38.00px;height:1.00px;background:#e3e5e8;"></div>
<div style="left:149.00px;top:761.00px;width:37.00px;height:18.00px;line-height:18.00px;font-size:9.4px;color:#5f6368;text-align:center;font-weight:400;">33</div>
<div style="left:149.00px;top:778.30px;width:38.00px;height:1.00px;background:#e3e5e8;"></div>
<div style="left:149.00px;top:778.00px;width:37.00px;height:18.00px;line-height:18.00px;font-size:9.4px;color:#5f6368;text-align:center;font-weight:400;">34</div>
<div style="left:149.00px;top:796.05px;width:38.00px;height:1.00px;background:#e3e5e8;"></div>
<div style="left:149.00px;top:796.00px;width:37.00px;height:18.00px;line-height:18.00px;font-size:9.4px;color:#5f6368;text-align:center;font-weight:400;">35</div>
<div style="left:149.00px;top:813.80px;width:38.00px;height:1.00px;background:#e3e5e8;"></div>
<div style="left:149.00px;top:814.00px;width:37.00px;height:18.00px;line-height:18.00px;font-size:9.4px;color:#5f6368;text-align:center;font-weight:400;">36</div>
<div style="left:149.00px;top:831.55px;width:38.00px;height:1.00px;background:#e3e5e8;"></div>
<div style="left:149.00px;top:832.00px;width:37.00px;height:18.00px;line-height:18.00px;font-size:9.4px;color:#5f6368;text-align:center;font-weight:400;">37</div>
<div style="left:149.00px;top:849.30px;width:38.00px;height:1.00px;background:#e3e5e8;"></div>
<div style="left:149.00px;top:849.00px;width:37.00px;height:18.00px;line-height:18.00px;font-size:9.4px;color:#5f6368;text-align:center;font-weight:400;">38</div>
<div style="left:149.00px;top:867.05px;width:38.00px;height:1.00px;background:#e3e5e8;"></div>
<div style="left:149.00px;top:867.00px;width:37.00px;height:18.00px;line-height:18.00px;font-size:9.4px;color:#5f6368;text-align:center;font-weight:400;">39</div>
<div style="left:149.00px;top:884.80px;width:38.00px;height:1.00px;background:#e3e5e8;"></div>
<div style="left:149.00px;top:885.00px;width:37.00px;height:18.00px;line-height:18.00px;font-size:9.4px;color:#5f6368;text-align:center;font-weight:400;">40</div>
<div style="left:149.00px;top:902.55px;width:38.00px;height:1.00px;background:#e3e5e8;"></div>
<div style="left:149.00px;top:244.90px;width:38.00px;height:1.00px;background:#e3e5e8;"></div>
<div style="left:186.90px;top:245.30px;width:1.00px;height:655.90px;background:#cfd1d4;"></div>
<div style="left:0;top:0;width:1552px;height:901.2px;overflow:hidden">
<div style="left:187.40px;top:246.30px;width:146.90px;height:17.75px;background:#51808d;"></div>
<div style="left:334.30px;top:246.30px;width:437.30px;height:17.75px;background:#51808d;"></div>
<div style="left:187.40px;top:264.05px;width:146.90px;height:17.75px;background:#d2e1f2;"></div>
<div style="left:187.40px;top:281.80px;width:146.90px;height:17.75px;background:#edc44d;"></div>
<div style="left:334.30px;top:281.80px;width:437.30px;height:17.75px;background:#edc44d;"></div>
<div style="left:187.40px;top:299.55px;width:146.90px;height:17.75px;background:#d2e1f2;"></div>
<div style="left:187.40px;top:317.30px;width:146.90px;height:17.75px;background:#d2e1f2;"></div>
<div style="left:187.40px;top:335.05px;width:146.90px;height:17.75px;background:#d2e1f2;"></div>
<div style="left:187.40px;top:352.80px;width:146.90px;height:17.75px;background:#d2e1f2;"></div>
<div style="left:187.40px;top:370.55px;width:146.90px;height:17.75px;background:#d2e1f2;"></div>
<div style="left:334.30px;top:370.55px;width:437.30px;height:17.75px;background:#fcd86c;"></div>
<div style="left:187.40px;top:388.30px;width:146.90px;height:17.75px;background:#d2e1f2;"></div>
<div style="left:187.40px;top:406.05px;width:146.90px;height:17.75px;background:#d2e1f2;"></div>
<div style="left:334.30px;top:406.05px;width:437.30px;height:17.75px;background:#fde7a0;"></div>
<div style="left:187.40px;top:423.80px;width:146.90px;height:17.75px;background:#d2e1f2;"></div>
<div style="left:187.40px;top:441.55px;width:146.90px;height:17.75px;background:#d2e1f2;"></div>
<div style="left:334.30px;top:441.55px;width:437.30px;height:17.75px;background:#fcd86c;"></div>
<div style="left:908.40px;top:246.30px;width:171.00px;height:17.75px;background:#51808d;"></div>
<div style="left:908.40px;top:264.05px;width:171.00px;height:17.75px;background:#d2e1f2;"></div>
<div style="left:908.40px;top:281.80px;width:171.00px;height:17.75px;background:#edc44d;"></div>
<div style="left:908.40px;top:299.55px;width:171.00px;height:17.75px;background:#d2e1f2;"></div>
<div style="left:908.40px;top:317.30px;width:171.00px;height:17.75px;background:#d2e1f2;"></div>
<div style="left:908.40px;top:335.05px;width:171.00px;height:17.75px;background:#d2e1f2;"></div>
<div style="left:908.40px;top:352.80px;width:171.00px;height:17.75px;background:#d2e1f2;"></div>
<div style="left:908.40px;top:370.55px;width:171.00px;height:17.75px;background:#d2e1f2;"></div>
<div style="left:908.40px;top:388.30px;width:171.00px;height:17.75px;background:#d2e1f2;"></div>
<div style="left:908.40px;top:406.05px;width:171.00px;height:17.75px;background:#d2e1f2;"></div>
<div style="left:908.40px;top:423.80px;width:171.00px;height:17.75px;background:#d2e1f2;"></div>
<div style="left:908.40px;top:441.55px;width:171.00px;height:17.75px;background:#d2e1f2;"></div>
<div style="left:187.40px;top:512.55px;width:721.00px;height:17.75px;background:#b7d5a6;"></div>
<div style="left:908.40px;top:512.55px;width:551.10px;height:17.75px;background:#a8c0ef;"></div>
<div style="left:1459.50px;top:512.55px;width:92.50px;height:17.75px;background:#a8c0ef;"></div>
<div style="left:334.30px;top:583.55px;width:1125.20px;height:17.75px;background:#fbfa4a;"></div>
<div style="left:1459.50px;top:583.55px;width:92.50px;height:17.75px;background:#fbfa4a;"></div>
<div style="left:187.40px;top:601.30px;width:1272.10px;height:17.75px;background:#98c282;"></div>
<div style="left:1459.50px;top:601.30px;width:92.50px;height:17.75px;background:#98c282;"></div>
<div style="left:771.60px;top:601.30px;width:136.80px;height:17.75px;background:#e8352a;"></div>
<div style="left:334.30px;top:654.55px;width:1125.20px;height:17.75px;background:#bbd6ad;"></div>
<div style="left:1459.50px;top:654.55px;width:92.50px;height:17.75px;background:#bbd6ad;"></div>
<div style="left:187.40px;top:814.30px;width:584.20px;height:17.75px;background:#b7d5a6;"></div>
<div style="left:771.60px;top:814.30px;width:687.90px;height:17.75px;background:#a8c0ef;"></div>
<div style="left:1459.50px;top:814.30px;width:92.50px;height:17.75px;background:#a8c0ef;"></div>
<div style="left:1079.40px;top:849.80px;width:85.10px;height:17.75px;background:#951a17;"></div>
<div style="left:186.90px;top:245.80px;width:585.20px;height:1.00px;background:#1b1b1b;"></div>
<div style="left:186.90px;top:263.55px;width:585.20px;height:1.00px;background:#1b1b1b;"></div>
<div style="left:186.90px;top:281.30px;width:585.20px;height:1.00px;background:#1b1b1b;"></div>
<div style="left:186.90px;top:299.05px;width:585.20px;height:1.00px;background:#1b1b1b;"></div>
<div style="left:186.90px;top:316.80px;width:585.20px;height:1.00px;background:#1b1b1b;"></div>
<div style="left:186.90px;top:334.55px;width:585.20px;height:1.00px;background:#1b1b1b;"></div>
<div style="left:186.90px;top:352.30px;width:585.20px;height:1.00px;background:#1b1b1b;"></div>
<div style="left:186.90px;top:370.05px;width:585.20px;height:1.00px;background:#1b1b1b;"></div>
<div style="left:186.90px;top:387.80px;width:585.20px;height:1.00px;background:#1b1b1b;"></div>
<div style="left:186.90px;top:405.55px;width:585.20px;height:1.00px;background:#1b1b1b;"></div>
<div style="left:186.90px;top:423.30px;width:585.20px;height:1.00px;background:#1b1b1b;"></div>
<div style="left:186.90px;top:441.05px;width:585.20px;height:1.00px;background:#1b1b1b;"></div>
<div style="left:186.90px;top:458.80px;width:585.20px;height:1.00px;background:#1b1b1b;"></div>
<div style="left:333.80px;top:245.80px;width:1.00px;height:214.00px;background:#1b1b1b;"></div>
<div style="left:454.60px;top:245.80px;width:1.00px;height:214.00px;background:#1b1b1b;"></div>
<div style="left:540.20px;top:245.80px;width:1.00px;height:214.00px;background:#1b1b1b;"></div>
<div style="left:685.50px;top:245.80px;width:1.00px;height:214.00px;background:#1b1b1b;"></div>
<div style="left:771.10px;top:245.80px;width:1.00px;height:214.00px;background:#1b1b1b;"></div>
<div style="left:907.90px;top:245.80px;width:257.10px;height:1.00px;background:#1b1b1b;"></div>
<div style="left:907.90px;top:263.55px;width:257.10px;height:1.00px;background:#1b1b1b;"></div>
<div style="left:907.90px;top:281.30px;width:257.10px;height:1.00px;background:#1b1b1b;"></div>
<div style="left:907.90px;top:299.05px;width:257.10px;height:1.00px;background:#1b1b1b;"></div>
<div style="left:907.90px;top:316.80px;width:257.10px;height:1.00px;background:#1b1b1b;"></div>
<div style="left:907.90px;top:334.55px;width:257.10px;height:1.00px;background:#1b1b1b;"></div>
<div style="left:907.90px;top:352.30px;width:257.10px;height:1.00px;background:#1b1b1b;"></div>
<div style="left:907.90px;top:370.05px;width:257.10px;height:1.00px;background:#1b1b1b;"></div>
<div style="left:907.90px;top:387.80px;width:257.10px;height:1.00px;background:#1b1b1b;"></div>
<div style="left:907.90px;top:405.55px;width:257.10px;height:1.00px;background:#1b1b1b;"></div>
<div style="left:907.90px;top:423.30px;width:257.10px;height:1.00px;background:#1b1b1b;"></div>
<div style="left:907.90px;top:441.05px;width:257.10px;height:1.00px;background:#1b1b1b;"></div>
<div style="left:907.90px;top:458.80px;width:257.10px;height:1.00px;background:#1b1b1b;"></div>
<div style="left:907.90px;top:245.80px;width:1.00px;height:214.00px;background:#1b1b1b;"></div>
<div style="left:1078.90px;top:245.80px;width:1.00px;height:214.00px;background:#1b1b1b;"></div>
<div style="left:1164.00px;top:245.80px;width:1.00px;height:214.00px;background:#1b1b1b;"></div>
<div style="left:186.90px;top:512.05px;width:1273.10px;height:1.00px;background:#1b1b1b;"></div>
<div style="left:186.90px;top:529.80px;width:1273.10px;height:1.00px;background:#1b1b1b;"></div>
<div style="left:186.90px;top:547.55px;width:1273.10px;height:1.00px;background:#1b1b1b;"></div>
<div style="left:186.90px;top:565.30px;width:1273.10px;height:1.00px;background:#1b1b1b;"></div>
<div style="left:186.90px;top:583.05px;width:1273.10px;height:1.00px;background:#1b1b1b;"></div>
<div style="left:186.90px;top:600.80px;width:1273.10px;height:1.00px;background:#1b1b1b;"></div>
<div style="left:186.90px;top:618.55px;width:1273.10px;height:1.00px;background:#1b1b1b;"></div>
<div style="left:186.90px;top:636.30px;width:1273.10px;height:1.00px;background:#1b1b1b;"></div>
<div style="left:186.90px;top:654.05px;width:1273.10px;height:1.00px;background:#1b1b1b;"></div>
<div style="left:186.90px;top:671.80px;width:1273.10px;height:1.00px;background:#1b1b1b;"></div>
<div style="left:186.90px;top:689.55px;width:1273.10px;height:1.00px;background:#1b1b1b;"></div>
<div style="left:907.90px;top:512.05px;width:1.00px;height:18.75px;background:#1b1b1b;"></div>
<div style="left:1459.00px;top:512.05px;width:1.00px;height:178.50px;background:#1b1b1b;"></div>
<div style="left:333.80px;top:529.80px;width:1.00px;height:160.75px;background:#1b1b1b;"></div>
<div style="left:454.60px;top:529.80px;width:1.00px;height:160.75px;background:#1b1b1b;"></div>
<div style="left:540.20px;top:529.80px;width:1.00px;height:160.75px;background:#1b1b1b;"></div>
<div style="left:685.50px;top:529.80px;width:1.00px;height:160.75px;background:#1b1b1b;"></div>
<div style="left:771.10px;top:529.80px;width:1.00px;height:160.75px;background:#1b1b1b;"></div>
<div style="left:907.90px;top:529.80px;width:1.00px;height:160.75px;background:#1b1b1b;"></div>
<div style="left:1078.90px;top:529.80px;width:1.00px;height:160.75px;background:#1b1b1b;"></div>
<div style="left:1164.00px;top:529.80px;width:1.00px;height:160.75px;background:#1b1b1b;"></div>
<div style="left:1249.20px;top:529.80px;width:1.00px;height:160.75px;background:#1b1b1b;"></div>
<div style="left:1334.80px;top:529.80px;width:1.00px;height:160.75px;background:#1b1b1b;"></div>
<div style="left:186.90px;top:813.80px;width:1273.10px;height:1.00px;background:#1b1b1b;"></div>
<div style="left:186.90px;top:831.55px;width:1273.10px;height:1.00px;background:#1b1b1b;"></div>
<div style="left:186.90px;top:849.30px;width:1273.10px;height:1.00px;background:#1b1b1b;"></div>
<div style="left:186.90px;top:867.05px;width:1273.10px;height:1.00px;background:#1b1b1b;"></div>
<div style="left:186.90px;top:884.80px;width:1273.10px;height:1.00px;background:#1b1b1b;"></div>
<div style="left:771.10px;top:813.80px;width:1.00px;height:18.75px;background:#1b1b1b;"></div>
<div style="left:1459.00px;top:813.80px;width:1.00px;height:89.75px;background:#1b1b1b;"></div>
<div style="left:333.80px;top:831.55px;width:1.00px;height:72.00px;background:#1b1b1b;"></div>
<div style="left:454.60px;top:831.55px;width:1.00px;height:72.00px;background:#1b1b1b;"></div>
<div style="left:540.20px;top:831.55px;width:1.00px;height:72.00px;background:#1b1b1b;"></div>
<div style="left:685.50px;top:831.55px;width:1.00px;height:72.00px;background:#1b1b1b;"></div>
<div style="left:771.10px;top:831.55px;width:1.00px;height:72.00px;background:#1b1b1b;"></div>
<div style="left:907.90px;top:831.55px;width:1.00px;height:72.00px;background:#1b1b1b;"></div>
<div style="left:1078.90px;top:831.55px;width:1.00px;height:72.00px;background:#1b1b1b;"></div>
<div style="left:1164.00px;top:831.55px;width:1.00px;height:72.00px;background:#1b1b1b;"></div>
<div style="left:1249.20px;top:831.55px;width:1.00px;height:72.00px;background:#1b1b1b;"></div>
<div style="left:1334.80px;top:831.55px;width:1.00px;height:72.00px;background:#1b1b1b;"></div>
<div style="left:190.70px;top:246.00px;width:140.30px;height:18.00px;line-height:18.00px;font-size:11.25px;color:#151515;text-align:left;font-weight:400;white-space:pre;white-space:pre">Items</div>
<div style="left:337.60px;top:246.00px;width:114.20px;height:18.00px;line-height:18.00px;font-size:11.25px;color:#151515;text-align:left;font-weight:400;white-space:pre;white-space:pre">Semana 1</div>
<div style="left:458.40px;top:246.00px;width:79.00px;height:18.00px;line-height:18.00px;font-size:11.25px;color:#151515;text-align:left;font-weight:400;white-space:pre;white-space:pre">Semana 2</div>
<div style="left:544.00px;top:246.00px;width:138.70px;height:18.00px;line-height:18.00px;font-size:11.25px;color:#151515;text-align:left;font-weight:400;white-space:pre;white-space:pre">Semana 3</div>
<div style="left:689.30px;top:246.00px;width:79.00px;height:18.00px;line-height:18.00px;font-size:11.25px;color:#151515;text-align:left;font-weight:400;white-space:pre;white-space:pre">Semana 4</div>
<div style="left:190.70px;top:264.00px;width:140.30px;height:18.00px;line-height:18.00px;font-size:11.25px;color:#151515;text-align:left;font-weight:400;white-space:pre;white-space:pre">Balance inicio de semana</div>
<div style="left:337.60px;top:264.00px;width:114.20px;height:18.00px;line-height:18.00px;font-size:11.25px;color:#151515;text-align:center;font-weight:400;white-space:pre;white-space:pre">$1.013,00</div>
<div style="left:458.40px;top:264.00px;width:79.00px;height:18.00px;line-height:18.00px;font-size:11.25px;color:#151515;text-align:center;font-weight:400;white-space:pre;white-space:pre">$1.618,00</div>
<div style="left:544.00px;top:264.00px;width:138.70px;height:18.00px;line-height:18.00px;font-size:11.25px;color:#151515;text-align:center;font-weight:400;white-space:pre;white-space:pre">$2.966,00</div>
<div style="left:689.30px;top:264.00px;width:79.00px;height:18.00px;line-height:18.00px;font-size:11.25px;color:#151515;text-align:center;font-weight:400;white-space:pre;white-space:pre">$4.983,00</div>
<div style="left:190.70px;top:282.00px;width:140.30px;height:18.00px;line-height:18.00px;font-size:11.25px;color:#151515;text-align:left;font-weight:400;white-space:pre;white-space:pre">Total Invertido</div>
<div style="left:337.60px;top:282.00px;width:114.20px;height:18.00px;line-height:18.00px;font-size:11.25px;color:#151515;text-align:center;font-weight:400;white-space:pre;white-space:pre">$6.919,00</div>
<div style="left:458.40px;top:282.00px;width:79.00px;height:18.00px;line-height:18.00px;font-size:11.25px;color:#151515;text-align:center;font-weight:400;white-space:pre;white-space:pre">$12.045,00</div>
<div style="left:544.00px;top:282.00px;width:138.70px;height:18.00px;line-height:18.00px;font-size:11.25px;color:#151515;text-align:center;font-weight:400;white-space:pre;white-space:pre">$13.011,00</div>
<div style="left:689.30px;top:282.00px;width:79.00px;height:18.00px;line-height:18.00px;font-size:11.25px;color:#151515;text-align:center;font-weight:400;white-space:pre;white-space:pre">$0,00</div>
<div style="left:190.70px;top:299.00px;width:140.30px;height:18.00px;line-height:18.00px;font-size:11.25px;color:#151515;text-align:left;font-weight:400;white-space:pre;white-space:pre">Profits de la semana $</div>
<div style="left:337.60px;top:299.00px;width:114.20px;height:18.00px;line-height:18.00px;font-size:11.25px;color:#151515;text-align:center;font-weight:400;white-space:pre;white-space:pre">$605,00</div>
<div style="left:458.40px;top:299.00px;width:79.00px;height:18.00px;line-height:18.00px;font-size:11.25px;color:#151515;text-align:center;font-weight:400;white-space:pre;white-space:pre">$1.348,00</div>
<div style="left:544.00px;top:299.00px;width:138.70px;height:18.00px;line-height:18.00px;font-size:11.25px;color:#151515;text-align:center;font-weight:400;white-space:pre;white-space:pre">$2.017,00</div>
<div style="left:689.30px;top:299.00px;width:79.00px;height:18.00px;line-height:18.00px;font-size:11.25px;color:#151515;text-align:center;font-weight:400;white-space:pre;white-space:pre">$0,00</div>
<div style="left:190.70px;top:317.00px;width:140.30px;height:18.00px;line-height:18.00px;font-size:11.25px;color:#151515;text-align:left;font-weight:400;white-space:pre;white-space:pre">Promedio de ganancias $</div>
<div style="left:337.60px;top:317.00px;width:114.20px;height:18.00px;line-height:18.00px;font-size:11.25px;color:#151515;text-align:center;font-weight:400;white-space:pre;white-space:pre">$121,00</div>
<div style="left:458.40px;top:317.00px;width:79.00px;height:18.00px;line-height:18.00px;font-size:11.25px;color:#151515;text-align:center;font-weight:400;white-space:pre;white-space:pre">$269,60</div>
<div style="left:544.00px;top:317.00px;width:138.70px;height:18.00px;line-height:18.00px;font-size:11.25px;color:#151515;text-align:center;font-weight:400;white-space:pre;white-space:pre">$403,40</div>
<div style="left:689.30px;top:317.00px;width:79.00px;height:18.00px;line-height:18.00px;font-size:11.25px;color:#151515;text-align:center;font-weight:400;white-space:pre;white-space:pre">$0,00</div>
<div style="left:190.70px;top:335.00px;width:140.30px;height:18.00px;line-height:18.00px;font-size:11.25px;color:#151515;text-align:left;font-weight:400;white-space:pre;white-space:pre">Mediana de ganancias $</div>
<div style="left:337.60px;top:335.00px;width:114.20px;height:18.00px;line-height:18.00px;font-size:11.25px;color:#151515;text-align:center;font-weight:400;white-space:pre;white-space:pre">$216,00</div>
<div style="left:458.40px;top:335.00px;width:79.00px;height:18.00px;line-height:18.00px;font-size:11.25px;color:#151515;text-align:center;font-weight:400;white-space:pre;white-space:pre">$137,00</div>
<div style="left:544.00px;top:335.00px;width:138.70px;height:18.00px;line-height:18.00px;font-size:11.25px;color:#151515;text-align:center;font-weight:400;white-space:pre;white-space:pre">$50,00</div>
<div style="left:689.30px;top:335.00px;width:79.00px;height:18.00px;line-height:18.00px;font-size:11.25px;color:#151515;text-align:center;font-weight:400;white-space:pre;white-space:pre">$0,00</div>
<div style="left:190.70px;top:353.00px;width:140.30px;height:18.00px;line-height:18.00px;font-size:11.25px;color:#151515;text-align:left;font-weight:400;white-space:pre;white-space:pre">Promedia de ganancias  %</div>
<div style="left:337.60px;top:353.00px;width:114.20px;height:18.00px;line-height:18.00px;font-size:11.25px;color:#151515;text-align:center;font-weight:400;white-space:pre;white-space:pre">10,96%</div>
<div style="left:458.40px;top:353.00px;width:79.00px;height:18.00px;line-height:18.00px;font-size:11.25px;color:#151515;text-align:center;font-weight:400;white-space:pre;white-space:pre">14,70%</div>
<div style="left:544.00px;top:353.00px;width:138.70px;height:18.00px;line-height:18.00px;font-size:11.25px;color:#151515;text-align:center;font-weight:400;white-space:pre;white-space:pre">13,28%</div>
<div style="left:689.30px;top:353.00px;width:79.00px;height:18.00px;line-height:18.00px;font-size:11.25px;color:#151515;text-align:center;font-weight:400;white-space:pre;white-space:pre">0,00%</div>
<div style="left:190.70px;top:370.00px;width:140.30px;height:18.00px;line-height:18.00px;font-size:11.25px;color:#151515;text-align:left;font-weight:400;white-space:pre;white-space:pre">Mediana de ganancias%</div>
<div style="left:337.60px;top:370.00px;width:114.20px;height:18.00px;line-height:18.00px;font-size:11.25px;color:#151515;text-align:center;font-weight:400;white-space:pre;white-space:pre">13,81%</div>
<div style="left:458.40px;top:370.00px;width:79.00px;height:18.00px;line-height:18.00px;font-size:11.25px;color:#151515;text-align:center;font-weight:400;white-space:pre;white-space:pre">6,82%</div>
<div style="left:544.00px;top:370.00px;width:138.70px;height:18.00px;line-height:18.00px;font-size:11.25px;color:#151515;text-align:center;font-weight:400;white-space:pre;white-space:pre">1,89%</div>
<div style="left:689.30px;top:370.00px;width:79.00px;height:18.00px;line-height:18.00px;font-size:11.25px;color:#151515;text-align:center;font-weight:400;white-space:pre;white-space:pre">0,00%</div>
<div style="left:544.00px;top:388.00px;width:138.70px;height:18.00px;line-height:18.00px;font-size:11.25px;color:#151515;text-align:center;font-weight:400;white-space:pre;white-space:pre">$0,00</div>
<div style="left:689.30px;top:388.00px;width:79.00px;height:18.00px;line-height:18.00px;font-size:11.25px;color:#151515;text-align:center;font-weight:400;white-space:pre;white-space:pre">$0,00</div>
<div style="left:190.70px;top:406.00px;width:140.30px;height:18.00px;line-height:18.00px;font-size:11.25px;color:#151515;text-align:left;font-weight:400;white-space:pre;white-space:pre">Retorno de inversion %</div>
<div style="left:337.60px;top:406.00px;width:114.20px;height:18.00px;line-height:18.00px;font-size:11.25px;color:#151515;text-align:center;font-weight:400;white-space:pre;white-space:pre">8,74%</div>
<div style="left:458.40px;top:406.00px;width:79.00px;height:18.00px;line-height:18.00px;font-size:11.25px;color:#151515;text-align:center;font-weight:400;white-space:pre;white-space:pre">11,19%</div>
<div style="left:544.00px;top:406.00px;width:138.70px;height:18.00px;line-height:18.00px;font-size:11.25px;color:#151515;text-align:center;font-weight:400;white-space:pre;white-space:pre">15,50%</div>
<div style="left:689.30px;top:406.00px;width:79.00px;height:18.00px;line-height:18.00px;font-size:11.25px;color:#151515;text-align:center;font-weight:400;white-space:pre;white-space:pre">0,00%</div>
<div style="left:190.70px;top:424.00px;width:140.30px;height:18.00px;line-height:18.00px;font-size:11.25px;color:#151515;text-align:left;font-weight:400;white-space:pre;white-space:pre">Balance final de semana  $</div>
<div style="left:337.60px;top:424.00px;width:114.20px;height:18.00px;line-height:18.00px;font-size:11.25px;color:#151515;text-align:center;font-weight:400;white-space:pre;white-space:pre">$1.618,00</div>
<div style="left:458.40px;top:424.00px;width:79.00px;height:18.00px;line-height:18.00px;font-size:11.25px;color:#151515;text-align:center;font-weight:400;white-space:pre;white-space:pre">$2.966,00</div>
<div style="left:544.00px;top:424.00px;width:138.70px;height:18.00px;line-height:18.00px;font-size:11.25px;color:#151515;text-align:center;font-weight:400;white-space:pre;white-space:pre">$4.983,00</div>
<div style="left:689.30px;top:424.00px;width:79.00px;height:18.00px;line-height:18.00px;font-size:11.25px;color:#151515;text-align:center;font-weight:400;white-space:pre;white-space:pre">$0,00</div>
<div style="left:190.70px;top:441.00px;width:140.30px;height:18.00px;line-height:18.00px;font-size:11.25px;color:#151515;text-align:left;font-weight:400;white-space:pre;white-space:pre">Crecimiento de cuenta %</div>
<div style="left:337.60px;top:441.00px;width:114.20px;height:18.00px;line-height:18.00px;font-size:11.25px;color:#151515;text-align:center;font-weight:400;white-space:pre;white-space:pre">59,72%</div>
<div style="left:458.40px;top:441.00px;width:79.00px;height:18.00px;line-height:18.00px;font-size:11.25px;color:#151515;text-align:center;font-weight:400;white-space:pre;white-space:pre">83,31%</div>
<div style="left:544.00px;top:441.00px;width:138.70px;height:18.00px;line-height:18.00px;font-size:11.25px;color:#151515;text-align:center;font-weight:400;white-space:pre;white-space:pre">68,00%</div>
<div style="left:689.30px;top:441.00px;width:79.00px;height:18.00px;line-height:18.00px;font-size:11.25px;color:#151515;text-align:center;font-weight:400;white-space:pre;white-space:pre">0,00%</div>
<div style="left:911.70px;top:246.00px;width:164.40px;height:18.00px;line-height:18.00px;font-size:11.25px;color:#151515;text-align:left;font-weight:400;white-space:pre;">Items</div>
<div style="left:911.70px;top:264.00px;width:164.40px;height:18.00px;line-height:18.00px;font-size:11.25px;color:#151515;text-align:left;font-weight:400;white-space:pre;">Balance inicio de mes</div>
<div style="left:1082.70px;top:264.00px;width:78.50px;height:18.00px;line-height:18.00px;font-size:11.25px;color:#151515;text-align:right;font-weight:400;white-space:pre;">$1.013,00</div>
<div style="left:911.70px;top:282.00px;width:164.40px;height:18.00px;line-height:18.00px;font-size:11.25px;color:#151515;text-align:left;font-weight:400;white-space:pre;">Total invertido</div>
<div style="left:1082.70px;top:282.00px;width:78.50px;height:18.00px;line-height:18.00px;font-size:11.25px;color:#151515;text-align:right;font-weight:400;white-space:pre;">$31.975,00</div>
<div style="left:911.70px;top:299.00px;width:164.40px;height:18.00px;line-height:18.00px;font-size:11.25px;color:#151515;text-align:left;font-weight:400;white-space:pre;">Ganancias</div>
<div style="left:1082.70px;top:299.00px;width:78.50px;height:18.00px;line-height:18.00px;font-size:11.25px;color:#151515;text-align:right;font-weight:400;white-space:pre;">$3.970,00</div>
<div style="left:911.70px;top:317.00px;width:164.40px;height:18.00px;line-height:18.00px;font-size:11.25px;color:#151515;text-align:left;font-weight:400;white-space:pre;">Retorno promedio $</div>
<div style="left:1082.70px;top:317.00px;width:78.50px;height:18.00px;line-height:18.00px;font-size:11.25px;color:#151515;text-align:right;font-weight:400;white-space:pre;">$195,30</div>
<div style="left:911.70px;top:335.00px;width:164.40px;height:18.00px;line-height:18.00px;font-size:11.25px;color:#151515;text-align:left;font-weight:400;white-space:pre;">Mediana de retorno $</div>
<div style="left:1082.70px;top:335.00px;width:78.50px;height:18.00px;line-height:18.00px;font-size:11.25px;color:#151515;text-align:right;font-weight:400;white-space:pre;">$176,50</div>
<div style="left:911.70px;top:353.00px;width:164.40px;height:18.00px;line-height:18.00px;font-size:11.25px;color:#151515;text-align:left;font-weight:400;white-space:pre;">Retorno promedio %</div>
<div style="left:1082.70px;top:353.00px;width:78.50px;height:18.00px;line-height:18.00px;font-size:11.25px;color:#151515;text-align:right;font-weight:400;white-space:pre;">12,83%</div>
<div style="left:911.70px;top:370.00px;width:164.40px;height:18.00px;line-height:18.00px;font-size:11.25px;color:#151515;text-align:left;font-weight:400;white-space:pre;">Mediana de retorno %</div>
<div style="left:1082.70px;top:370.00px;width:78.50px;height:18.00px;line-height:18.00px;font-size:11.25px;color:#151515;text-align:right;font-weight:400;white-space:pre;">10,32%</div>
<div style="left:911.70px;top:406.00px;width:164.40px;height:18.00px;line-height:18.00px;font-size:11.25px;color:#151515;text-align:left;font-weight:400;white-space:pre;">ROI</div>
<div style="left:1082.70px;top:406.00px;width:78.50px;height:18.00px;line-height:18.00px;font-size:11.25px;color:#151515;text-align:right;font-weight:400;white-space:pre;">12,42%</div>
<div style="left:911.70px;top:424.00px;width:164.40px;height:18.00px;line-height:18.00px;font-size:11.25px;color:#151515;text-align:left;font-weight:400;white-space:pre;">Balance final de mes</div>
<div style="left:1082.70px;top:424.00px;width:78.50px;height:18.00px;line-height:18.00px;font-size:11.25px;color:#151515;text-align:right;font-weight:400;white-space:pre;">$0,00</div>
<div style="left:911.70px;top:441.00px;width:164.40px;height:18.00px;line-height:18.00px;font-size:11.25px;color:#151515;text-align:left;font-weight:400;white-space:pre;">Crecimiento desde inicio de mes</div>
<div style="left:1082.70px;top:441.00px;width:78.50px;height:18.00px;line-height:18.00px;font-size:11.25px;color:#151515;text-align:right;font-weight:400;white-space:pre;">391,91%</div>
<div style="left:190.70px;top:512.00px;width:714.40px;height:18.00px;line-height:18.00px;font-size:11.25px;color:#151515;text-align:center;font-weight:400;white-space:pre;">Week 1</div>
<div style="left:911.70px;top:512.00px;width:544.50px;height:18.00px;line-height:18.00px;font-size:11.25px;color:#151515;text-align:center;font-weight:400;white-space:pre;">Week 2</div>
<div style="left:337.60px;top:530.00px;width:114.20px;height:18.00px;line-height:18.00px;font-size:11.25px;color:#151515;text-align:center;font-weight:400;white-space:pre;">day 1</div>
<div style="left:458.40px;top:530.00px;width:79.00px;height:18.00px;line-height:18.00px;font-size:11.25px;color:#151515;text-align:center;font-weight:400;white-space:pre;">day 2</div>
<div style="left:544.00px;top:530.00px;width:138.70px;height:18.00px;line-height:18.00px;font-size:11.25px;color:#151515;text-align:center;font-weight:400;white-space:pre;">day 3</div>
<div style="left:689.30px;top:530.00px;width:79.00px;height:18.00px;line-height:18.00px;font-size:11.25px;color:#151515;text-align:center;font-weight:400;white-space:pre;">day 4</div>
<div style="left:774.90px;top:530.00px;width:130.20px;height:18.00px;line-height:18.00px;font-size:11.25px;color:#151515;text-align:center;font-weight:400;white-space:pre;">Day 5</div>
<div style="left:911.70px;top:530.00px;width:164.40px;height:18.00px;line-height:18.00px;font-size:11.25px;color:#151515;text-align:center;font-weight:400;white-space:pre;">day 6</div>
<div style="left:1082.70px;top:530.00px;width:78.50px;height:18.00px;line-height:18.00px;font-size:11.25px;color:#151515;text-align:center;font-weight:400;white-space:pre;">day 7 </div>
<div style="left:1167.80px;top:530.00px;width:78.60px;height:18.00px;line-height:18.00px;font-size:11.25px;color:#151515;text-align:center;font-weight:400;white-space:pre;">day 8 </div>
<div style="left:1253.00px;top:530.00px;width:79.00px;height:18.00px;line-height:18.00px;font-size:11.25px;color:#151515;text-align:center;font-weight:400;white-space:pre;">day 9 </div>
<div style="left:1338.60px;top:530.00px;width:117.60px;height:18.00px;line-height:18.00px;font-size:11.25px;color:#151515;text-align:left;font-weight:400;white-space:pre;">Day10</div>
<div style="left:190.70px;top:548.00px;width:140.30px;height:18.00px;line-height:18.00px;font-size:11.25px;color:#151515;text-align:center;font-weight:400;white-space:pre;">Marzo</div>
<div style="left:337.60px;top:548.00px;width:114.20px;height:18.00px;line-height:18.00px;font-size:11.25px;color:#151515;text-align:center;font-weight:400;white-space:pre;">1</div>
<div style="left:458.40px;top:548.00px;width:79.00px;height:18.00px;line-height:18.00px;font-size:11.25px;color:#151515;text-align:center;font-weight:400;white-space:pre;">2</div>
<div style="left:544.00px;top:548.00px;width:138.70px;height:18.00px;line-height:18.00px;font-size:11.25px;color:#151515;text-align:center;font-weight:400;white-space:pre;">3</div>
<div style="left:689.30px;top:548.00px;width:79.00px;height:18.00px;line-height:18.00px;font-size:11.25px;color:#151515;text-align:center;font-weight:400;white-space:pre;">4</div>
<div style="left:774.90px;top:548.00px;width:130.20px;height:18.00px;line-height:18.00px;font-size:11.25px;color:#151515;text-align:right;font-weight:400;white-space:pre;">5</div>
<div style="left:911.70px;top:548.00px;width:164.40px;height:18.00px;line-height:18.00px;font-size:11.25px;color:#151515;text-align:right;font-weight:400;white-space:pre;">6</div>
<div style="left:1082.70px;top:548.00px;width:78.50px;height:18.00px;line-height:18.00px;font-size:11.25px;color:#151515;text-align:right;font-weight:400;white-space:pre;">7</div>
<div style="left:1167.80px;top:548.00px;width:78.60px;height:18.00px;line-height:18.00px;font-size:11.25px;color:#151515;text-align:right;font-weight:400;white-space:pre;">8</div>
<div style="left:1253.00px;top:548.00px;width:79.00px;height:18.00px;line-height:18.00px;font-size:11.25px;color:#151515;text-align:right;font-weight:400;white-space:pre;">9</div>
<div style="left:1338.60px;top:548.00px;width:117.60px;height:18.00px;line-height:18.00px;font-size:11.25px;color:#151515;text-align:right;font-weight:400;white-space:pre;">10</div>
<div style="left:190.70px;top:566.00px;width:140.30px;height:18.00px;line-height:18.00px;font-size:11.25px;color:#151515;text-align:center;font-weight:400;white-space:pre;">Cash</div>
<div style="left:337.60px;top:566.00px;width:114.20px;height:18.00px;line-height:18.00px;font-size:11.25px;color:#151515;text-align:center;font-weight:400;white-space:pre;">$1.013,00</div>
<div style="left:458.40px;top:566.00px;width:79.00px;height:18.00px;line-height:18.00px;font-size:11.25px;color:#151515;text-align:center;font-weight:400;white-space:pre;">$1.364,00</div>
<div style="left:544.00px;top:566.00px;width:138.70px;height:18.00px;line-height:18.00px;font-size:11.25px;color:#151515;text-align:center;font-weight:400;white-space:pre;">$1.550,00</div>
<div style="left:689.30px;top:566.00px;width:79.00px;height:18.00px;line-height:18.00px;font-size:11.25px;color:#151515;text-align:center;font-weight:400;white-space:pre;">$1.638,00</div>
<div style="left:774.90px;top:566.00px;width:130.20px;height:18.00px;line-height:18.00px;font-size:11.25px;color:#151515;text-align:center;font-weight:400;white-space:pre;">$1.884,00</div>
<div style="left:911.70px;top:566.00px;width:164.40px;height:18.00px;line-height:18.00px;font-size:11.25px;color:#151515;text-align:center;font-weight:400;white-space:pre;">$1.618,00</div>
<div style="left:1082.70px;top:566.00px;width:78.50px;height:18.00px;line-height:18.00px;font-size:11.25px;color:#151515;text-align:center;font-weight:400;white-space:pre;">$2.381,00</div>
<div style="left:1167.80px;top:566.00px;width:78.60px;height:18.00px;line-height:18.00px;font-size:11.25px;color:#151515;text-align:center;font-weight:400;white-space:pre;">$2.518,00</div>
<div style="left:1253.00px;top:566.00px;width:79.00px;height:18.00px;line-height:18.00px;font-size:11.25px;color:#151515;text-align:center;font-weight:400;white-space:pre;">$2.749,00</div>
<div style="left:1338.60px;top:566.00px;width:117.60px;height:18.00px;line-height:18.00px;font-size:11.25px;color:#151515;text-align:center;font-weight:400;white-space:pre;">$2.864,00</div>
<div style="left:190.70px;top:583.00px;width:140.30px;height:18.00px;line-height:18.00px;font-size:11.25px;color:#151515;text-align:center;font-weight:400;white-space:pre;">Invertido ese dia </div>
<div style="left:337.60px;top:583.00px;width:114.20px;height:18.00px;line-height:18.00px;font-size:11.25px;color:#151515;text-align:center;font-weight:400;white-space:pre;">$1.000,00</div>
<div style="left:458.40px;top:583.00px;width:79.00px;height:18.00px;line-height:18.00px;font-size:11.25px;color:#151515;text-align:center;font-weight:400;white-space:pre;">$1.347,00</div>
<div style="left:544.00px;top:583.00px;width:138.70px;height:18.00px;line-height:18.00px;font-size:11.25px;color:#151515;text-align:center;font-weight:400;white-space:pre;">$1.372,00</div>
<div style="left:689.30px;top:583.00px;width:79.00px;height:18.00px;line-height:18.00px;font-size:11.25px;color:#151515;text-align:center;font-weight:400;white-space:pre;">$1.564,00</div>
<div style="left:774.90px;top:583.00px;width:130.20px;height:18.00px;line-height:18.00px;font-size:11.25px;color:#151515;text-align:center;font-weight:400;white-space:pre;">$1.636,00</div>
<div style="left:911.70px;top:583.00px;width:164.40px;height:18.00px;line-height:18.00px;font-size:11.25px;color:#151515;text-align:center;font-weight:400;white-space:pre;">$1.492,00</div>
<div style="left:1082.70px;top:583.00px;width:78.50px;height:18.00px;line-height:18.00px;font-size:11.25px;color:#151515;text-align:center;font-weight:400;white-space:pre;">$2.008,00</div>
<div style="left:1167.80px;top:583.00px;width:78.60px;height:18.00px;line-height:18.00px;font-size:11.25px;color:#151515;text-align:center;font-weight:400;white-space:pre;">$3.030,00</div>
<div style="left:1253.00px;top:583.00px;width:79.00px;height:18.00px;line-height:18.00px;font-size:11.25px;color:#151515;text-align:center;font-weight:400;white-space:pre;">$2.657,00</div>
<div style="left:1338.60px;top:583.00px;width:117.60px;height:18.00px;line-height:18.00px;font-size:11.25px;color:#151515;text-align:center;font-weight:400;white-space:pre;">$2.858,00</div>
<div style="left:190.70px;top:601.00px;width:140.30px;height:18.00px;line-height:18.00px;font-size:11.25px;color:#151515;text-align:center;font-weight:400;white-space:pre;">P/L $</div>
<div style="left:337.60px;top:601.00px;width:114.20px;height:18.00px;line-height:18.00px;font-size:11.25px;color:#151515;text-align:center;font-weight:400;white-space:pre;">$351,00</div>
<div style="left:458.40px;top:601.00px;width:79.00px;height:18.00px;line-height:18.00px;font-size:11.25px;color:#151515;text-align:center;font-weight:400;white-space:pre;">$186,00</div>
<div style="left:544.00px;top:601.00px;width:138.70px;height:18.00px;line-height:18.00px;font-size:11.25px;color:#151515;text-align:center;font-weight:400;white-space:pre;">$88,00</div>
<div style="left:689.30px;top:601.00px;width:79.00px;height:18.00px;line-height:18.00px;font-size:11.25px;color:#151515;text-align:center;font-weight:400;white-space:pre;">$246,00</div>
<div style="left:774.90px;top:601.00px;width:130.20px;height:18.00px;line-height:18.00px;font-size:11.25px;color:#6a1510;text-align:center;font-weight:400;white-space:pre;">-$266,00</div>
<div style="left:911.70px;top:601.00px;width:164.40px;height:18.00px;line-height:18.00px;font-size:11.25px;color:#151515;text-align:center;font-weight:400;white-space:pre;">$763,00</div>
<div style="left:1082.70px;top:601.00px;width:78.50px;height:18.00px;line-height:18.00px;font-size:11.25px;color:#151515;text-align:center;font-weight:400;white-space:pre;">$137,00</div>
<div style="left:1167.80px;top:601.00px;width:78.60px;height:18.00px;line-height:18.00px;font-size:11.25px;color:#151515;text-align:center;font-weight:400;white-space:pre;">$231,00</div>
<div style="left:1253.00px;top:601.00px;width:79.00px;height:18.00px;line-height:18.00px;font-size:11.25px;color:#151515;text-align:center;font-weight:400;white-space:pre;">$115,00</div>
<div style="left:1338.60px;top:601.00px;width:117.60px;height:18.00px;line-height:18.00px;font-size:11.25px;color:#151515;text-align:center;font-weight:400;white-space:pre;">$102,00</div>
<div style="left:190.70px;top:619.00px;width:140.30px;height:18.00px;line-height:18.00px;font-size:11.25px;color:#151515;text-align:center;font-weight:400;white-space:pre;">P/L %  </div>
<div style="left:337.60px;top:619.00px;width:114.20px;height:18.00px;line-height:18.00px;font-size:11.25px;color:#151515;text-align:center;font-weight:400;white-space:pre;">35,10%</div>
<div style="left:458.40px;top:619.00px;width:79.00px;height:18.00px;line-height:18.00px;font-size:11.25px;color:#151515;text-align:center;font-weight:400;white-space:pre;">13,81%</div>
<div style="left:544.00px;top:619.00px;width:138.70px;height:18.00px;line-height:18.00px;font-size:11.25px;color:#151515;text-align:center;font-weight:400;white-space:pre;">6,41%</div>
<div style="left:689.30px;top:619.00px;width:79.00px;height:18.00px;line-height:18.00px;font-size:11.25px;color:#151515;text-align:center;font-weight:400;white-space:pre;">15,73%</div>
<div style="left:774.90px;top:619.00px;width:130.20px;height:18.00px;line-height:18.00px;font-size:11.25px;color:#151515;text-align:center;font-weight:400;white-space:pre;">-16,26%</div>
<div style="left:911.70px;top:619.00px;width:164.40px;height:18.00px;line-height:18.00px;font-size:11.25px;color:#151515;text-align:center;font-weight:400;white-space:pre;">51,14%</div>
<div style="left:1082.70px;top:619.00px;width:78.50px;height:18.00px;line-height:18.00px;font-size:11.25px;color:#151515;text-align:center;font-weight:400;white-space:pre;">6,82%</div>
<div style="left:1167.80px;top:619.00px;width:78.60px;height:18.00px;line-height:18.00px;font-size:11.25px;color:#151515;text-align:center;font-weight:400;white-space:pre;">7,62%</div>
<div style="left:1253.00px;top:619.00px;width:79.00px;height:18.00px;line-height:18.00px;font-size:11.25px;color:#151515;text-align:center;font-weight:400;white-space:pre;">4,33%</div>
<div style="left:1338.60px;top:619.00px;width:117.60px;height:18.00px;line-height:18.00px;font-size:11.25px;color:#151515;text-align:center;font-weight:400;white-space:pre;">3,57%</div>
<div style="left:190.70px;top:637.00px;width:140.30px;height:18.00px;line-height:18.00px;font-size:11.25px;color:#151515;text-align:center;font-weight:400;white-space:pre;">Total </div>
<div style="left:337.60px;top:637.00px;width:114.20px;height:18.00px;line-height:18.00px;font-size:11.25px;color:#151515;text-align:center;font-weight:400;white-space:pre;">$1.364,00</div>
<div style="left:458.40px;top:637.00px;width:79.00px;height:18.00px;line-height:18.00px;font-size:11.25px;color:#151515;text-align:center;font-weight:400;white-space:pre;">$1.550,00</div>
<div style="left:544.00px;top:637.00px;width:138.70px;height:18.00px;line-height:18.00px;font-size:11.25px;color:#151515;text-align:center;font-weight:400;white-space:pre;">$1.638,00</div>
<div style="left:689.30px;top:637.00px;width:79.00px;height:18.00px;line-height:18.00px;font-size:11.25px;color:#151515;text-align:center;font-weight:400;white-space:pre;">$1.884,00</div>
<div style="left:774.90px;top:637.00px;width:130.20px;height:18.00px;line-height:18.00px;font-size:11.25px;color:#151515;text-align:center;font-weight:400;white-space:pre;">$1.618,00</div>
<div style="left:911.70px;top:637.00px;width:164.40px;height:18.00px;line-height:18.00px;font-size:11.25px;color:#151515;text-align:center;font-weight:400;white-space:pre;">$2.381,00</div>
<div style="left:1082.70px;top:637.00px;width:78.50px;height:18.00px;line-height:18.00px;font-size:11.25px;color:#151515;text-align:center;font-weight:400;white-space:pre;">$2.518,00</div>
<div style="left:1167.80px;top:637.00px;width:78.60px;height:18.00px;line-height:18.00px;font-size:11.25px;color:#151515;text-align:center;font-weight:400;white-space:pre;">$2.749,00</div>
<div style="left:1253.00px;top:637.00px;width:79.00px;height:18.00px;line-height:18.00px;font-size:11.25px;color:#151515;text-align:center;font-weight:400;white-space:pre;">$2.864,00</div>
<div style="left:1338.60px;top:637.00px;width:117.60px;height:18.00px;line-height:18.00px;font-size:11.25px;color:#151515;text-align:center;font-weight:400;white-space:pre;">$2.966,00</div>
<div style="left:185.40px;top:654.00px;width:150.90px;height:18.00px;line-height:18.00px;font-size:11.25px;color:#151515;text-align:center;font-weight:400;">Crecimiento cuenta del dia %</div>
<div style="left:337.60px;top:654.00px;width:114.20px;height:18.00px;line-height:18.00px;font-size:11.25px;color:#151515;text-align:center;font-weight:400;white-space:pre;">34,65%</div>
<div style="left:458.40px;top:654.00px;width:79.00px;height:18.00px;line-height:18.00px;font-size:11.25px;color:#151515;text-align:center;font-weight:400;white-space:pre;">13,64%</div>
<div style="left:544.00px;top:654.00px;width:138.70px;height:18.00px;line-height:18.00px;font-size:11.25px;color:#151515;text-align:center;font-weight:400;white-space:pre;">5,68%</div>
<div style="left:689.30px;top:654.00px;width:79.00px;height:18.00px;line-height:18.00px;font-size:11.25px;color:#151515;text-align:center;font-weight:400;white-space:pre;">15,02%</div>
<div style="left:774.90px;top:654.00px;width:130.20px;height:18.00px;line-height:18.00px;font-size:11.25px;color:#151515;text-align:center;font-weight:400;white-space:pre;">-14,12%</div>
<div style="left:911.70px;top:654.00px;width:164.40px;height:18.00px;line-height:18.00px;font-size:11.25px;color:#151515;text-align:center;font-weight:400;white-space:pre;">47,16%</div>
<div style="left:1082.70px;top:654.00px;width:78.50px;height:18.00px;line-height:18.00px;font-size:11.25px;color:#151515;text-align:center;font-weight:400;white-space:pre;">5,75%</div>
<div style="left:1167.80px;top:654.00px;width:78.60px;height:18.00px;line-height:18.00px;font-size:11.25px;color:#151515;text-align:center;font-weight:400;white-space:pre;">9,17%</div>
<div style="left:1253.00px;top:654.00px;width:79.00px;height:18.00px;line-height:18.00px;font-size:11.25px;color:#151515;text-align:center;font-weight:400;white-space:pre;">4,18%</div>
<div style="left:1338.60px;top:654.00px;width:117.60px;height:18.00px;line-height:18.00px;font-size:11.25px;color:#151515;text-align:center;font-weight:400;white-space:pre;">3,56%</div>
<div style="left:190.70px;top:672.00px;width:140.30px;height:18.00px;line-height:18.00px;font-size:11.25px;color:#151515;text-align:center;font-weight:400;white-space:pre;">Cantidad de trades </div>
<div style="left:337.60px;top:672.00px;width:114.20px;height:18.00px;line-height:18.00px;font-size:11.25px;color:#151515;text-align:center;font-weight:400;white-space:pre;">1</div>
<div style="left:458.40px;top:672.00px;width:79.00px;height:18.00px;line-height:18.00px;font-size:11.25px;color:#151515;text-align:center;font-weight:400;white-space:pre;">2</div>
<div style="left:544.00px;top:672.00px;width:138.70px;height:18.00px;line-height:18.00px;font-size:11.25px;color:#151515;text-align:center;font-weight:400;white-space:pre;">1</div>
<div style="left:689.30px;top:672.00px;width:79.00px;height:18.00px;line-height:18.00px;font-size:11.25px;color:#151515;text-align:center;font-weight:400;white-space:pre;">2</div>
<div style="left:774.90px;top:672.00px;width:130.20px;height:18.00px;line-height:18.00px;font-size:11.25px;color:#151515;text-align:center;font-weight:400;white-space:pre;">1</div>
<div style="left:911.70px;top:672.00px;width:164.40px;height:18.00px;line-height:18.00px;font-size:11.25px;color:#151515;text-align:center;font-weight:400;white-space:pre;">1</div>
<div style="left:1082.70px;top:672.00px;width:78.50px;height:18.00px;line-height:18.00px;font-size:11.25px;color:#151515;text-align:center;font-weight:400;white-space:pre;">2</div>
<div style="left:1167.80px;top:672.00px;width:78.60px;height:18.00px;line-height:18.00px;font-size:11.25px;color:#151515;text-align:center;font-weight:400;white-space:pre;">2</div>
<div style="left:1253.00px;top:672.00px;width:79.00px;height:18.00px;line-height:18.00px;font-size:11.25px;color:#151515;text-align:center;font-weight:400;white-space:pre;">2</div>
<div style="left:1338.60px;top:672.00px;width:117.60px;height:18.00px;line-height:18.00px;font-size:11.25px;color:#151515;text-align:center;font-weight:400;white-space:pre;">1</div>
<div style="left:911.70px;top:725.00px;width:164.40px;height:18.00px;line-height:18.00px;font-size:11.25px;color:#151515;text-align:right;font-weight:400;white-space:pre;">31,53%</div>
<div style="left:1338.50px;top:709.40px;width:213.50px;height:14.00px;line-height:14.00px;font-size:11.2px;color:#151515;text-align:left;font-weight:400;overflow:hidden">1. Trade Horrible</div>
<div style="left:1338.50px;top:722.90px;width:213.50px;height:14.00px;line-height:14.00px;font-size:11.2px;color:#151515;text-align:left;font-weight:400;overflow:hidden">2. Cambiaste de activo de META PUTS a TSLA CALLS</div>
<div style="left:1338.50px;top:736.40px;width:213.50px;height:14.00px;line-height:14.00px;font-size:11.2px;color:#151515;text-align:left;font-weight:400;overflow:hidden">3. Meta respeto tu setup 100%, te precipitaste</div>
<div style="left:1338.50px;top:749.90px;width:213.50px;height:14.00px;line-height:14.00px;font-size:11.2px;color:#151515;text-align:left;font-weight:400;overflow:hidden">4. Use demasiado $ en el trade de TSLA, sali</div>
<div style="left:1338.50px;top:763.40px;width:213.50px;height:14.00px;line-height:14.00px;font-size:11.2px;color:#151515;text-align:left;font-weight:400;overflow:hidden">5. Te despertaste muy cerca del open del mercado</div>
<div style="left:190.70px;top:814.00px;width:577.60px;height:18.00px;line-height:18.00px;font-size:11.25px;color:#151515;text-align:center;font-weight:400;white-space:pre;">Week 3</div>
<div style="left:774.90px;top:814.00px;width:681.30px;height:18.00px;line-height:18.00px;font-size:11.25px;color:#151515;text-align:center;font-weight:400;white-space:pre;">Week 4</div>
<div style="left:337.60px;top:832.00px;width:114.20px;height:18.00px;line-height:18.00px;font-size:11.25px;color:#151515;text-align:center;font-weight:400;white-space:pre;">day 11</div>
<div style="left:458.40px;top:832.00px;width:79.00px;height:18.00px;line-height:18.00px;font-size:11.25px;color:#151515;text-align:center;font-weight:400;white-space:pre;">day 12</div>
<div style="left:544.00px;top:832.00px;width:138.70px;height:18.00px;line-height:18.00px;font-size:11.25px;color:#151515;text-align:center;font-weight:400;white-space:pre;">day 13</div>
<div style="left:689.30px;top:832.00px;width:79.00px;height:18.00px;line-height:18.00px;font-size:11.25px;color:#151515;text-align:center;font-weight:400;white-space:pre;">day 14</div>
<div style="left:774.90px;top:832.00px;width:130.20px;height:18.00px;line-height:18.00px;font-size:11.25px;color:#151515;text-align:center;font-weight:400;white-space:pre;">day 15 </div>
<div style="left:911.70px;top:832.00px;width:164.40px;height:18.00px;line-height:18.00px;font-size:11.25px;color:#151515;text-align:center;font-weight:400;white-space:pre;">day 16 </div>
<div style="left:1082.70px;top:832.00px;width:78.50px;height:18.00px;line-height:18.00px;font-size:11.25px;color:#151515;text-align:center;font-weight:400;white-space:pre;">day 17 </div>
<div style="left:1167.80px;top:832.00px;width:78.60px;height:18.00px;line-height:18.00px;font-size:11.25px;color:#151515;text-align:center;font-weight:400;white-space:pre;">day 18</div>
<div style="left:1253.00px;top:832.00px;width:79.00px;height:18.00px;line-height:18.00px;font-size:11.25px;color:#151515;text-align:center;font-weight:400;white-space:pre;">day 19 </div>
<div style="left:1338.60px;top:832.00px;width:117.60px;height:18.00px;line-height:18.00px;font-size:11.25px;color:#151515;text-align:center;font-weight:400;white-space:pre;">day 20 </div>
<div style="left:190.70px;top:850.00px;width:140.30px;height:18.00px;line-height:18.00px;font-size:11.25px;color:#151515;text-align:center;font-weight:400;white-space:pre;">Enero</div>
<div style="left:337.60px;top:850.00px;width:114.20px;height:18.00px;line-height:18.00px;font-size:11.25px;color:#151515;text-align:center;font-weight:400;white-space:pre;">16</div>
<div style="left:458.40px;top:850.00px;width:79.00px;height:18.00px;line-height:18.00px;font-size:11.25px;color:#151515;text-align:center;font-weight:400;white-space:pre;">17</div>
<div style="left:544.00px;top:850.00px;width:138.70px;height:18.00px;line-height:18.00px;font-size:11.25px;color:#151515;text-align:center;font-weight:400;white-space:pre;">18</div>
<div style="left:689.30px;top:850.00px;width:79.00px;height:18.00px;line-height:18.00px;font-size:11.25px;color:#151515;text-align:center;font-weight:400;white-space:pre;">19</div>
<div style="left:774.90px;top:850.00px;width:130.20px;height:18.00px;line-height:18.00px;font-size:11.25px;color:#151515;text-align:right;font-weight:400;white-space:pre;">22</div>
<div style="left:911.70px;top:850.00px;width:164.40px;height:18.00px;line-height:18.00px;font-size:11.25px;color:#151515;text-align:right;font-weight:400;white-space:pre;">23</div>
<div style="left:1082.70px;top:850.00px;width:78.50px;height:18.00px;line-height:18.00px;font-size:11.25px;color:#3a0806;text-align:right;font-weight:400;white-space:pre;">24</div>
<div style="left:1167.80px;top:850.00px;width:78.60px;height:18.00px;line-height:18.00px;font-size:11.25px;color:#151515;text-align:right;font-weight:400;white-space:pre;">25</div>
<div style="left:1338.60px;top:850.00px;width:117.60px;height:18.00px;line-height:18.00px;font-size:11.25px;color:#151515;text-align:right;font-weight:400;white-space:pre;">26</div>
<div style="left:190.70px;top:867.00px;width:140.30px;height:18.00px;line-height:18.00px;font-size:11.25px;color:#151515;text-align:center;font-weight:400;white-space:pre;">Cash Balance</div>
<div style="left:337.60px;top:867.00px;width:114.20px;height:18.00px;line-height:18.00px;font-size:11.25px;color:#151515;text-align:center;font-weight:400;white-space:pre;">$2.966,00</div>
<div style="left:458.40px;top:867.00px;width:79.00px;height:18.00px;line-height:18.00px;font-size:11.25px;color:#151515;text-align:center;font-weight:400;white-space:pre;">$3.015,00</div>
<div style="left:544.00px;top:867.00px;width:138.70px;height:18.00px;line-height:18.00px;font-size:11.25px;color:#151515;text-align:center;font-weight:400;white-space:pre;">$3.141,00</div>
<div style="left:689.30px;top:867.00px;width:79.00px;height:18.00px;line-height:18.00px;font-size:11.25px;color:#151515;text-align:center;font-weight:400;white-space:pre;">$3.225,00</div>
<div style="left:774.90px;top:867.00px;width:130.20px;height:18.00px;line-height:18.00px;font-size:11.25px;color:#151515;text-align:center;font-weight:400;white-space:pre;">$3.275,00</div>
<div style="left:911.70px;top:867.00px;width:164.40px;height:18.00px;line-height:18.00px;font-size:11.25px;color:#151515;text-align:center;font-weight:400;white-space:pre;">$5.075,00</div>
<div style="left:1082.70px;top:867.00px;width:78.50px;height:18.00px;line-height:18.00px;font-size:11.25px;color:#151515;text-align:center;font-weight:400;white-space:pre;">0</div>
<div style="left:1167.80px;top:867.00px;width:78.60px;height:18.00px;line-height:18.00px;font-size:11.25px;color:#151515;text-align:center;font-weight:400;white-space:pre;">$0,00</div>
<div style="left:1253.00px;top:867.00px;width:79.00px;height:18.00px;line-height:18.00px;font-size:11.25px;color:#151515;text-align:center;font-weight:400;white-space:pre;">0</div>
<div style="left:1338.60px;top:867.00px;width:117.60px;height:18.00px;line-height:18.00px;font-size:11.25px;color:#151515;text-align:center;font-weight:400;white-space:pre;">$0,00</div>
<div style="left:190.70px;top:885.00px;width:140.30px;height:18.00px;line-height:18.00px;font-size:11.25px;color:#151515;text-align:center;font-weight:400;white-space:pre;">Invested</div>
<div style="left:337.60px;top:885.00px;width:114.20px;height:18.00px;line-height:18.00px;font-size:11.25px;color:#151515;text-align:center;font-weight:400;white-space:pre;">$2.866,00</div>
<div style="left:458.40px;top:885.00px;width:79.00px;height:18.00px;line-height:18.00px;font-size:11.25px;color:#151515;text-align:center;font-weight:400;white-space:pre;">$1.544,00</div>
<div style="left:544.00px;top:885.00px;width:138.70px;height:18.00px;line-height:18.00px;font-size:11.25px;color:#151515;text-align:center;font-weight:400;white-space:pre;">$2.676,00</div>
<div style="left:689.30px;top:885.00px;width:79.00px;height:18.00px;line-height:18.00px;font-size:11.25px;color:#151515;text-align:center;font-weight:400;white-space:pre;">$2.650,00</div>
<div style="left:774.90px;top:885.00px;width:130.20px;height:18.00px;line-height:18.00px;font-size:11.25px;color:#151515;text-align:center;font-weight:400;white-space:pre;">$3.275,00</div>
<div style="left:911.70px;top:885.00px;width:164.40px;height:18.00px;line-height:18.00px;font-size:11.25px;color:#151515;text-align:center;font-weight:400;white-space:pre;">$2.340,00</div>
<div style="left:1082.70px;top:885.00px;width:78.50px;height:18.00px;line-height:18.00px;font-size:11.25px;color:#151515;text-align:center;font-weight:400;white-space:pre;">$0,00</div>
<div style="left:1167.80px;top:885.00px;width:78.60px;height:18.00px;line-height:18.00px;font-size:11.25px;color:#151515;text-align:center;font-weight:400;white-space:pre;">$0,00</div>
<div style="left:1338.60px;top:885.00px;width:117.60px;height:18.00px;line-height:18.00px;font-size:11.25px;color:#151515;text-align:center;font-weight:400;white-space:pre;">$0,00</div>
<svg style="left:1244.20px;top:584.05px" width="5" height="5" viewBox="0 0 5 5"><path d="M0 0h5v5z" fill="#e39a2d"/></svg>
<div style="left:186.90px;top:511.55px;width:722.50px;height:19.75px;background:transparent;border:1.8px solid #3b67cc"></div>
<div style="left:905.40px;top:527.30px;width:6.50px;height:6.50px;background:#2f6be0;border-radius:50%;border:1px solid #fff"></div>
</div>
<div style="left:1552.00px;top:244.90px;width:10.00px;height:667.30px;background:#fafbfc;"></div>
<div style="left:1554.60px;top:282.00px;width:7.00px;height:452.00px;background:#dadce0;border-radius:4px"></div>
<div style="left:149.00px;top:901.20px;width:1403.00px;height:11.30px;background:#fff;"></div>
<div style="left:149.00px;top:901.20px;width:38.00px;height:11.30px;background:#f8f9fb;"></div>
<div style="left:189.50px;top:903.00px;width:1129.00px;height:6.80px;background:#dadce0;border-radius:4px"></div>
<svg style="left:1555.500px;top:880px" width="5" height="4" viewBox="0 0 5 4"><path d="M0 3.500 2.500.5 5 3.500z" fill="#b5b8bc"/></svg>
<svg style="left:1555.500px;top:893.5px" width="5" height="4" viewBox="0 0 5 4"><path d="M0 .5 2.500 3.500 5 .5z" fill="#b5b8bc"/></svg>
<svg style="left:1530px;top:904px" width="4" height="5" viewBox="0 0 4 5"><path d="M3.500 0 .5 2.500 3.500 5z" fill="#b5b8bc"/></svg>
<svg style="left:1543.5px;top:904px" width="4" height="5" viewBox="0 0 4 5"><path d="M.5 0 3.500 2.500.5 5z" fill="#b5b8bc"/></svg>
<div style="left:149.00px;top:912.50px;width:1413.00px;height:1.00px;background:#e4e7eb;"></div>
<svg style="left:195.50px;top:923.60px" width="10" height="10" viewBox="0 0 10 10"><path d="M5 .5v9M.5 5h9" stroke="#444" stroke-width="1.400"/></svg>
<svg style="left:228.50px;top:924.10px" width="12" height="9" viewBox="0 0 12 9"><path d="M0 1h12M0 4.500h12M0 8h12" stroke="#444" stroke-width="1.400"/></svg>
<div style="left:262.00px;top:912.00px;width:98.00px;height:30.50px;background:#e1e9f7;"></div>
<div style="left:273.00px;top:921.00px;width:15.00px;height:15.00px;background:#f7f9fc;border-radius:5px"></div>
<div style="left:273.00px;top:921.00px;width:15.00px;height:15.00px;line-height:15.00px;font-size:9.5px;color:#333;text-align:center;font-weight:400;">1</div>
<div style="left:294.00px;top:919.20px;width:50.00px;height:21.00px;line-height:21.00px;font-size:12.5px;color:#2a56c6;text-align:left;font-weight:400;-webkit-text-stroke:0.35px #2a56c6;letter-spacing:0.2px">Marzo</div>
<svg style="left:343.50px;top:927.00px" width="7" height="4" viewBox="0 0 7 4"><path d="M0 0h7L3.500 4z" fill="#2a56c6"/></svg>
<div style="left:370.50px;top:919.20px;width:40.00px;height:21.00px;line-height:21.00px;font-size:12.5px;color:#50545a;text-align:left;font-weight:400;letter-spacing:0.2px">Rate</div>
<svg style="left:406.50px;top:927.00px" width="7" height="4" viewBox="0 0 7 4"><path d="M0 0h7L3.500 4z" fill="#444"/></svg>
<svg style="left:1578.20px;top:171.00px" width="15" height="15" viewBox="0 0 15 15"><rect x="1" y="1" width="13" height="13" rx="2" fill="#fff" stroke="#4285f4" stroke-width="2.200"/><path d="M1 11.500h13V14H3a2 2 0 0 1-2-2z" fill="#34a853"/><path d="M11.500 1H14v11h-2.500z" fill="#fbbc04"/><text x="6.800" y="10" font-size="6.500" font-weight="700" text-anchor="middle" fill="#4285f4" font-family="Liberation Sans,sans-serif">31</text></svg>
<svg style="left:1578.20px;top:217.50px" width="15" height="16" viewBox="0 0 15 16"><rect x="0" y="0" width="15" height="16" rx="2" fill="#f5b62e"/><circle cx="7.500" cy="7" r="3" fill="#fff"/><rect x="6" y="10" width="3" height="2.500" fill="#fff"/></svg>
<svg style="left:1578.20px;top:265.00px" width="15" height="15" viewBox="0 0 15 15"><circle cx="7" cy="8" r="5.500" fill="none" stroke="#3367d6" stroke-width="2.200"/><path d="M4.500 8l2 2 5-6" fill="none" stroke="#3367d6" stroke-width="2"/><circle cx="12.500" cy="2.500" r="1.500" fill="#3367d6"/></svg>
<svg style="left:1579.70px;top:313.00px" width="12" height="14" viewBox="0 0 12 14"><circle cx="6" cy="3" r="2.500" fill="#2b50c8"/><path d="M.5 13c0-4 2-6 5.500-6s5.500 2 5.500 6z" fill="#2b50c8"/></svg>
<svg style="left:1580.20px;top:360.00px" width="11" height="15" viewBox="0 0 11 15"><path d="M5.500 15C2.500 10 .3 8 .3 5.200a5.200 5.200 0 0 1 10.400 0C10.700 8 8.500 10 5.500 15z" fill="#34a853"/><path d="M.3 5.200A5.200 5.200 0 0 1 5.500 0v5.200z" fill="#ea4335"/><path d="M5.500 0a5.200 5.200 0 0 1 5.200 5.200H5.500z" fill="#4285f4"/><path d="M.3 5.200h5.200L2.200 9.500C1 8 .3 6.800.3 5.200z" fill="#fbbc04"/><circle cx="5.500" cy="5.200" r="1.900" fill="#fff"/></svg>
<div style="left:1578.00px;top:405.50px;width:16.00px;height:1.00px;background:#dfe2e6;"></div>
<svg style="left:1579.70px;top:436.50px" width="12" height="12" viewBox="0 0 12 12"><path d="M6 .5v11M.5 6h11" stroke="#222" stroke-width="1.500"/></svg>
<svg style="left:1582.00px;top:914.00px" width="7" height="10" viewBox="0 0 7 10"><path d="M1 1l4.500 4L1 9" fill="none" stroke="#444" stroke-width="1.400"/></svg>
<svg style="left:1493.500px;top:751px" width="9" height="14" viewBox="0 0 9 14"><path d="M.5.5v10.500l2.600-2.300 1.800 4 1.600-.7-1.800-3.900h3.500z" fill="#111" stroke="#fff" stroke-width=".7"/></svg>
<svg style="left:149px;top:932px" width="10" height="10" viewBox="0 0 10 10"><path d="M0 0v10h10A10 10 0 0 1 0 0z" fill="#000"/></svg>
<svg style="left:1600px;top:932px" width="10" height="10" viewBox="0 0 10 10"><path d="M10 0v10H0A10 10 0 0 0 10 0z" fill="#000"/></svg>
<svg style="left:1501.5px;top:0px;overflow:hidden" width="270.5" height="150.4" viewBox="0 0 270.500 150.400">
<defs><filter id="b6" x="-30%" y="-30%" width="160%" height="160%"><feGaussianBlur stdDeviation="4.500"/></filter><filter id="b3" x="-30%" y="-30%" width="160%" height="160%"><feGaussianBlur stdDeviation="1.600"/></filter><filter id="b1" x="-30%" y="-30%" width="160%" height="160%"><feGaussianBlur stdDeviation="1"/></filter>
<linearGradient id="skin" x1="0" x2="1"><stop offset="0" stop-color="#d6b09a"/><stop offset=".5" stop-color="#c79d85"/><stop offset="1" stop-color="#9f7863"/></linearGradient>
<linearGradient id="rb" x1="0" y1="0" x2="0" y2="1"><stop offset="0" stop-color="#6a584d"/><stop offset=".4" stop-color="#4a382e"/><stop offset="1" stop-color="#4f3d33"/></linearGradient></defs>
<rect width="270.500" height="150.400" fill="#adb5b1"/>
<g filter="url(#b6)">
<rect x="78" y="-10" width="125" height="130" fill="#b0b8b4"/>
<path d="M-10 -10H90L80 8L62 28L-10 34z" fill="#8c8c8c"/>
<path d="M30 -10H84L70 18L58 28z" fill="#6a6867"/>
<path d="M-10 32L58 28C70 10 82 6 92 18C104 36 104 60 104 160H-10z" fill="#3a2820"/>
<ellipse cx="30" cy="92" rx="26" ry="22" fill="#573726"/>
<rect x="198" y="-10" width="58" height="175" fill="url(#rb)"/>
<rect x="257" y="-10" width="30" height="175" fill="#c4bac6"/>
<ellipse cx="55" cy="118" rx="7" ry="6" fill="#ddd8d0"/>
</g>
<g filter="url(#b3)">
<path d="M46 152L60 141C78 129 98 121 114 114L128 110L176 109C196 116 226 128 240 138L258 152z" fill="#5679ae"/>
<path d="M134 104L172 98L176 112C166 128 142 132 128 118z" fill="#b48b74"/>
<path d="M117 36C120 16 136 12 150 13C168 14 178 30 179 52C180 72 178 92 172 106C164 122 150 131 140 129C128 126 121 110 116 90C111 70 112 52 117 36z" fill="url(#skin)"/>
<path d="M118 30C122 12 138 8 154 9.500C172 11 186 24 188.500 46C189.500 58 187 64 183 68C181 54 177 38 168 28C156 18 134 16 124 26C121 29 119 32 118 30z" fill="#2a211e"/>
<ellipse cx="183.500" cy="76" rx="4" ry="11.500" fill="#b88d76"/>
<path d="M128 127C140 136 160 132 172 114L177 112C172 134 142 144 125 131z" fill="#4c6da3"/>
</g>
<g filter="url(#b1)">
<ellipse cx="120" cy="66.500" rx="6" ry="2" fill="#3a241c"/><ellipse cx="150" cy="65.500" rx="8" ry="2.300" fill="#3a241c"/>
<path d="M111.500 56q7-3.500 13-.5M140.500 55q10-4.500 21 1" stroke="#4a3328" stroke-width="2.800" fill="none" stroke-opacity=".8"/>
<ellipse cx="133" cy="105" rx="11.500" ry="4" fill="#8e504b"/><ellipse cx="132" cy="102.800" rx="7" ry="1.300" fill="#d9b8ae"/>
<path d="M127 72C124 80 121.500 86 124.500 90L134 91" stroke="#b08570" stroke-width="2" fill="none" stroke-opacity=".7"/>
</g>
<rect x="0" y="124.300" width="124.400" height="26.300" fill="#0a0a0c" fill-opacity=".74"/>
<text x="4.500" y="141.200" font-family="DejaVu Sans, Liberation Sans, sans-serif" font-weight="700" font-size="12.300" fill="#fff" textLength="114.500" lengthAdjust="spacingAndGlyphs">Abacus Experience</text>
</svg>
</div></body></html>
